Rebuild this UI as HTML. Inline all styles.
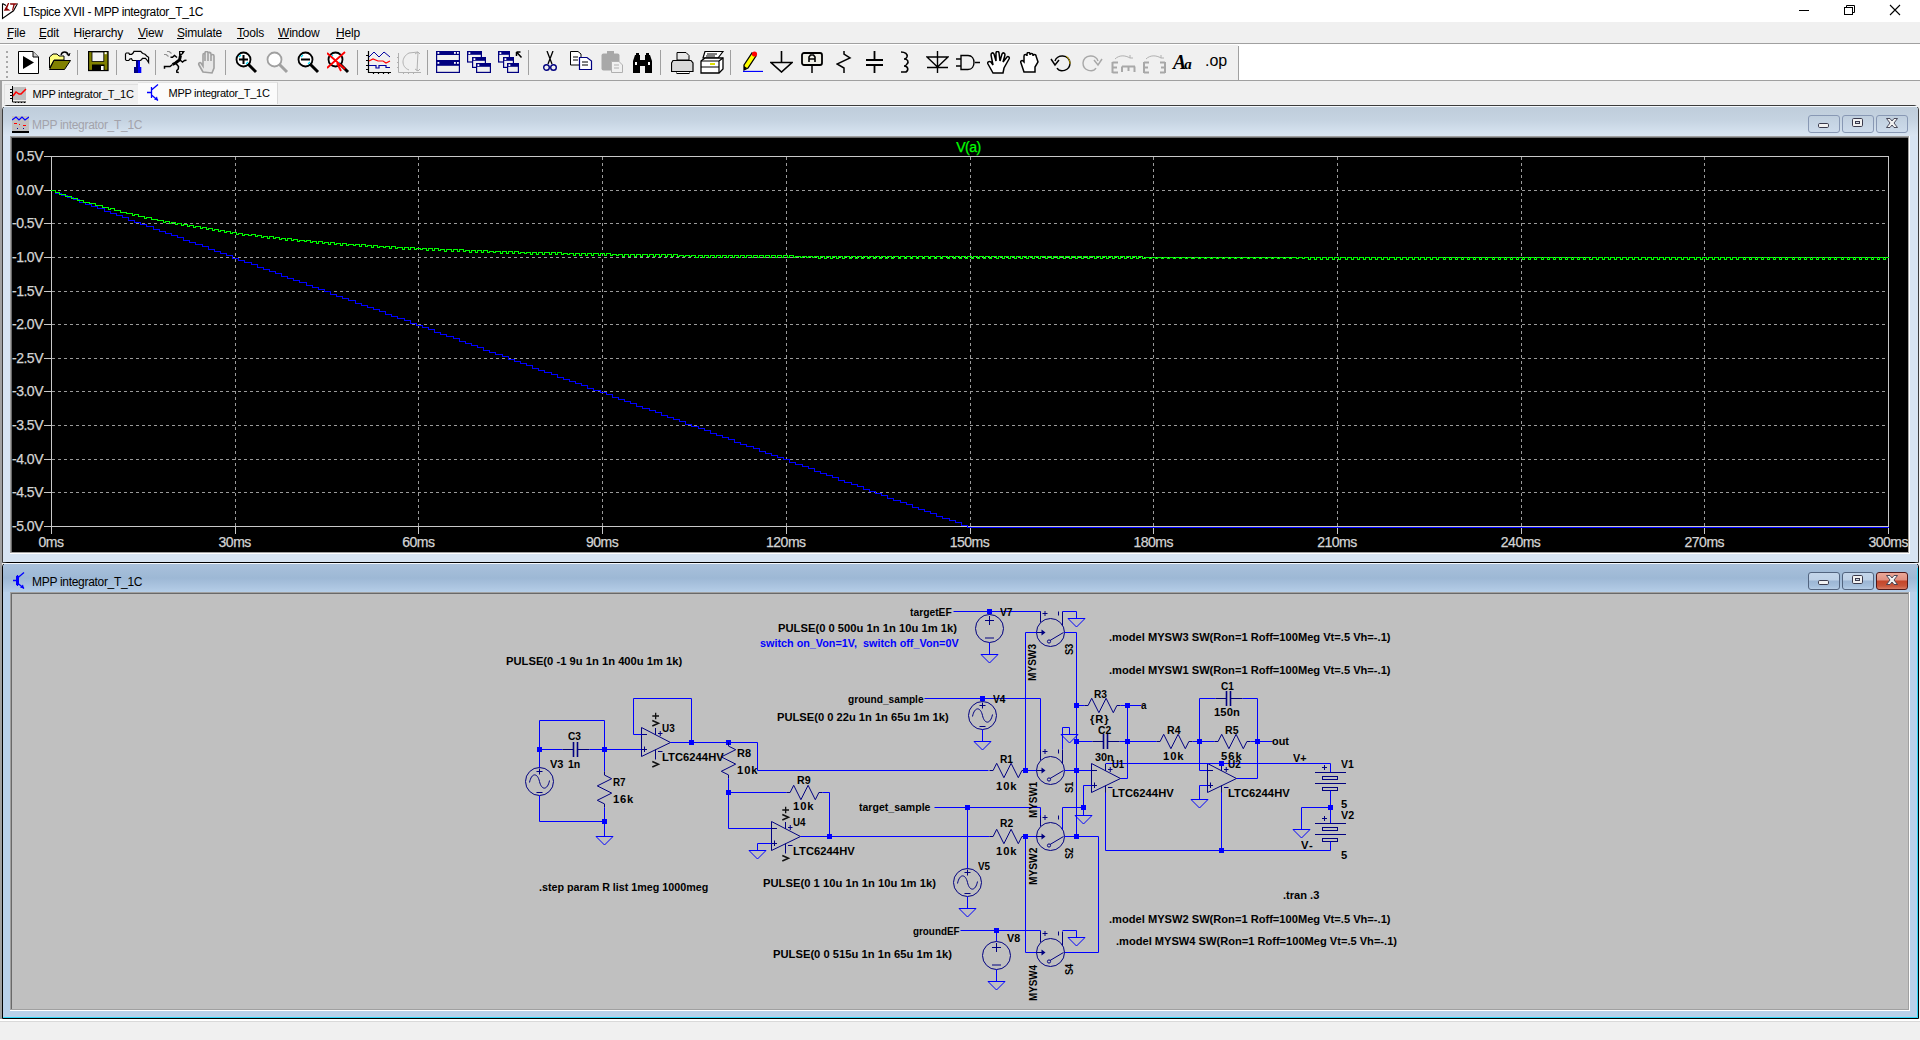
<!DOCTYPE html>
<html><head><meta charset="utf-8"><title>LTspice</title>
<style>
html,body{margin:0;padding:0;width:1920px;height:1040px;overflow:hidden;background:#f0f0f0;font-family:"Liberation Sans",sans-serif}
div{box-sizing:content-box}
</style></head><body>
<div style="position:absolute;left:0;top:0;width:1920px;height:22px;background:#fff"></div>
<svg style="position:absolute;left:0px;top:0px" width="22" height="22" viewBox="0 0 22 22">
<path d="M2.5 3.5 V18.5 L13.5 10.8 L17.5 3.5 M2.5 3.5 L6 5.5" fill="none" stroke="#000" stroke-width="1.1"/>
<path d="M8 3 L9.2 3 L7.2 8.2 L10.5 10.6 L3.8 10.8 Z" fill="#8b0000"/>
<path d="M10 3.3 L17.2 3.3 L15.8 4.8 L14.8 4.8 L13 10.5 L12 10.3 L13.3 4.8 L10.3 4.8 Z" fill="#8b0000"/>
</svg>
<div style="position:absolute;left:23px;top:5px;font:12px 'Liberation Sans', sans-serif;color:#000;white-space:nowrap;letter-spacing:-0.36px">LTspice XVII - MPP integrator_T_1C</div>
<svg style="position:absolute;left:1780px;top:0" width="140" height="22" viewBox="0 0 140 22">
<line x1="19" y1="10.5" x2="29" y2="10.5" stroke="#000" stroke-width="1"/>
<rect x="64.5" y="7.5" width="8" height="7" fill="none" stroke="#000"/>
<path d="M66.5 7.5 V5.5 H74.5 V12.5 H72.5" fill="none" stroke="#000"/>
<path d="M110 5 L120 15 M120 5 L110 15" stroke="#000" stroke-width="1.1"/>
</svg>
<div style="position:absolute;left:0;top:22px;width:1920px;height:21px;background:#f0f0f0"></div>
<div style="position:absolute;left:0;top:43px;width:1920px;height:1px;background:#a0a0a0"></div>
<div style="position:absolute;left:0;top:44px;width:1920px;height:1px;background:#ffffff"></div>
<div style="position:absolute;left:7px;top:26px;font:12px 'Liberation Sans', sans-serif;color:#000;white-space:nowrap;letter-spacing:-0.2px">File</div>
<div style="position:absolute;left:39px;top:26px;font:12px 'Liberation Sans', sans-serif;color:#000;white-space:nowrap;letter-spacing:-0.2px">Edit</div>
<div style="position:absolute;left:73.5px;top:26px;font:12px 'Liberation Sans', sans-serif;color:#000;white-space:nowrap;letter-spacing:-0.2px">Hierarchy</div>
<div style="position:absolute;left:138px;top:26px;font:12px 'Liberation Sans', sans-serif;color:#000;white-space:nowrap;letter-spacing:-0.2px">View</div>
<div style="position:absolute;left:177px;top:26px;font:12px 'Liberation Sans', sans-serif;color:#000;white-space:nowrap;letter-spacing:-0.2px">Simulate</div>
<div style="position:absolute;left:237px;top:26px;font:12px 'Liberation Sans', sans-serif;color:#000;white-space:nowrap;letter-spacing:-0.2px">Tools</div>
<div style="position:absolute;left:278px;top:26px;font:12px 'Liberation Sans', sans-serif;color:#000;white-space:nowrap;letter-spacing:-0.2px">Window</div>
<div style="position:absolute;left:336px;top:26px;font:12px 'Liberation Sans', sans-serif;color:#000;white-space:nowrap;letter-spacing:-0.2px">Help</div>
<div style="position:absolute;left:7px;top:38px;width:6px;height:1px;background:#000"></div>
<div style="position:absolute;left:39px;top:38px;width:7px;height:1px;background:#000"></div>
<div style="position:absolute;left:84px;top:38px;width:3px;height:1px;background:#000"></div>
<div style="position:absolute;left:138px;top:38px;width:8px;height:1px;background:#000"></div>
<div style="position:absolute;left:177px;top:38px;width:7px;height:1px;background:#000"></div>
<div style="position:absolute;left:237px;top:38px;width:7px;height:1px;background:#000"></div>
<div style="position:absolute;left:278px;top:38px;width:11px;height:1px;background:#000"></div>
<div style="position:absolute;left:336px;top:38px;width:8px;height:1px;background:#000"></div>
<div style="position:absolute;left:0;top:45px;width:1920px;height:35px;background:#ffffff"></div>
<div style="position:absolute;left:0;top:45px;width:1238px;height:35px;background:#f0f0f0"></div>
<div style="position:absolute;left:1238px;top:46px;width:1px;height:34px;background:#a0a0a0"></div>
<div style="position:absolute;left:0;top:80px;width:1920px;height:1px;background:#a0a0a0"></div>
<div style="position:absolute;left:0;top:81px;width:1920px;height:24px;background:#f0f0f0"></div>
<div style="position:absolute;left:0;top:81px;width:2px;height:959px;background:#a0a0a0"></div>
<div style="position:absolute;left:4px;top:84px;width:133px;height:19px;background:#f0f0f0;border:1px solid #e0e0e0;border-bottom:none"></div>
<div style="position:absolute;left:138px;top:82px;width:139px;height:21px;background:#fbfbfb;border-top:1px solid #e4e4e4;border-right:1px solid #d8d8d8"></div>
<div style="position:absolute;left:32.5px;top:88px;font:11px 'Liberation Sans', sans-serif;color:#000;white-space:nowrap;letter-spacing:-0.27px">MPP integrator_T_1C</div>
<div style="position:absolute;left:168.5px;top:87px;font:11px 'Liberation Sans', sans-serif;color:#000;white-space:nowrap;letter-spacing:-0.27px">MPP integrator_T_1C</div>
<svg style="position:absolute;left:10px;top:86px" width="17" height="17" viewBox="0 0 17 17">
<rect x="3" y="1" width="13" height="13" fill="#c0c0c0"/>
<path d="M2.5 0 V16 H16" fill="none" stroke="#000" stroke-width="1"/>
<path d="M0 3.5H2.5 M0 6.5H2.5 M0 9.5H2.5 M0 12.5H2.5 M5.5 16V17 M8.5 16V17 M11.5 16V17 M14.5 16V17" stroke="#000"/>
<path d="M3 10 L6 6 L9 8 L11 8 L16 3" fill="none" stroke="#ff0000" stroke-width="1.5"/>
</svg>
<svg style="position:absolute;left:147px;top:84px" width="14" height="17" viewBox="0 0 14 17">
<path d="M0 8.5H4 M4.5 3V14 M4.5 6 L11 0.5 M4.5 11 L11 16.5" fill="none" stroke="#0000ff" stroke-width="1.3"/>
<path d="M11 16.5 L7 15.5 L10 12.5Z" fill="#0000ff"/>
</svg>
<div style="position:absolute;left:0;top:1019px;width:1920px;height:2px;background:#ffffff"></div>
<div style="position:absolute;left:0;top:1021px;width:1920px;height:1px;background:#d9d9d9"></div>
<div style="position:absolute;left:0;top:1022px;width:1920px;height:18px;background:#f0f0f0"></div>
<svg style="position:absolute;left:5px;top:51px" width="4" height="30" viewBox="0 0 4 30"><rect x="1" y="0" width="2" height="2" fill="#a8a8a8"/><rect x="1" y="5" width="2" height="2" fill="#a8a8a8"/><rect x="1" y="10" width="2" height="2" fill="#a8a8a8"/><rect x="1" y="15" width="2" height="2" fill="#a8a8a8"/><rect x="1" y="20" width="2" height="2" fill="#a8a8a8"/><rect x="1" y="25" width="2" height="2" fill="#a8a8a8"/></svg>
<div style="position:absolute;left:77px;top:50px;width:1px;height:25px;background:#a0a0a0"></div>
<div style="position:absolute;left:116px;top:50px;width:1px;height:25px;background:#a0a0a0"></div>
<div style="position:absolute;left:155px;top:50px;width:1px;height:25px;background:#a0a0a0"></div>
<div style="position:absolute;left:225px;top:50px;width:1px;height:25px;background:#a0a0a0"></div>
<div style="position:absolute;left:357px;top:50px;width:1px;height:25px;background:#a0a0a0"></div>
<div style="position:absolute;left:427px;top:50px;width:1px;height:25px;background:#a0a0a0"></div>
<div style="position:absolute;left:528px;top:50px;width:1px;height:25px;background:#a0a0a0"></div>
<div style="position:absolute;left:660px;top:50px;width:1px;height:25px;background:#a0a0a0"></div>
<div style="position:absolute;left:730px;top:50px;width:1px;height:25px;background:#a0a0a0"></div>
<svg style="position:absolute;left:18px;top:51px" width="22" height="24" viewBox="0 0 22 24"><path d="M0.5 0.5 H15 L20.5 6 V22.5 H0.5 Z" fill="#fff" stroke="#000"/><path d="M15 0.5 V6 H20.5" fill="#d0d0d0" stroke="#000"/><path d="M5 5 L16 11.5 L5 18 Z" fill="#000"/></svg>
<svg style="position:absolute;left:49px;top:51px" width="23" height="20" viewBox="0 0 23 20"><path d="M0.5 6 L4 3 L8 3 L10 5 L15 5 L15 9 L5 9 L0.5 17 Z" fill="#ffff80" stroke="#000"/><path d="M0.5 18.5 L5 9.5 L21.5 9.5 L15.5 18.5 Z" fill="#808000" stroke="#000"/><path d="M12 4 C13 0 18 0 19.5 4" fill="none" stroke="#000" stroke-width="1.3"/><path d="M17.5 3 L20 5 L21 2" fill="none" stroke="#000"/></svg>
<svg style="position:absolute;left:88px;top:51px" width="21" height="21" viewBox="0 0 21 21"><rect x="0.5" y="0.5" width="19.5" height="19" fill="#808000" stroke="#000" stroke-width="1.3"/><rect x="4" y="1" width="11.8" height="9.5" fill="#f4f4f4" stroke="#000" stroke-width="0.8"/><rect x="16.7" y="1.2" width="2" height="2" fill="#fff"/><rect x="4" y="13.5" width="12.5" height="6" fill="#000"/><rect x="13" y="15" width="2.6" height="4" fill="#fff"/></svg>
<svg style="position:absolute;left:122px;top:48px" width="30" height="28" viewBox="0 0 30 28"><path d="M3.5 6 L4.3 5 H6.8 L7.5 6.3 H9.7 L11.3 4.8 L12 3.3 H18.8 L20 4.8 L21 5.5 L23 6.3 L25 8.2 L26.6 9.3 V14.5 L25 12 L23.5 10.4 H20.5 L19.6 11.5 L18.5 12.5 H10.5 L9.5 10.6 L7.8 11 L6.8 12.5 H4.3 L3.5 11.5 Z" fill="#f4f4f4" stroke="#000" stroke-width="1.2"/><rect x="14" y="12.5" width="4" height="7" fill="#0000ff"/><rect x="14" y="12.5" width="2" height="7" fill="#000080"/><rect x="12" y="19" width="7.3" height="6" fill="#0000ff"/><rect x="12" y="19" width="4" height="6" fill="#000080"/></svg>
<svg style="position:absolute;left:160px;top:48px" width="30" height="28" viewBox="0 0 30 28"><path d="M19 3 H25 L23 6 L21.5 7.2 L20 8.2 L19 7.5 Z" fill="#000"/><rect x="20.3" y="4" width="1.6" height="1.6" fill="#fff"/><path d="M20.5 7.5 L19.5 12 L15.5 15 L12.5 16.5" fill="none" stroke="#000" stroke-width="3"/><path d="M12.5 16.5 L10 18.5 H4.5 V20.8 M16 15.5 L18.5 18.5 L18.3 21 L16.8 22.5 V24.2 L18.8 24.5 M17 9.5 L14.5 7.5 L12.5 9.2 L10.5 9.3 M20 12 L22.5 14 L24.5 12.5 L26.5 12.3" fill="none" stroke="#000" stroke-width="1.5"/><path d="M7 3.5 H9.2 L11.5 5.5 M4 6.5 H6.2 L8.5 8.5" fill="none" stroke="#909090" stroke-width="1.1"/></svg>
<svg style="position:absolute;left:197px;top:51px" width="20" height="23" viewBox="0 0 20 23"><path d="M6 21 L2 14 C1 12 3 11 4 12 L6 15 V4 C6 2 8 2 8 4 V10 V2 C8 0 11 0 11 2 V10 V2 C11 1 14 1 14 3 V10 V5 C14 3 17 3 17 5 V17 L15 22 Z" fill="#e8e8e8" stroke="#a0a0a0" stroke-width="1.6"/></svg>
<svg style="position:absolute;left:235px;top:51px" width="23" height="23" viewBox="0 0 23 23"><circle cx="8.5" cy="8.5" r="7" fill="#fff" stroke="#000" stroke-width="1.8"/><path d="M13 13 L21 21" stroke="#000" stroke-width="3"/><path d="M4 6 L6 4 M11 13 L13 11" stroke="#00e0ff" stroke-width="1.2"/><path d="M4 8.5 H13 M8.5 4 V13" stroke="#000" stroke-width="2"/></svg>
<svg style="position:absolute;left:266px;top:51px" width="23" height="23" viewBox="0 0 23 23"><circle cx="8.5" cy="8.5" r="7" fill="#fff" stroke="#a0a0a0" stroke-width="1.8"/><path d="M13 13 L21 21" stroke="#a0a0a0" stroke-width="3"/></svg>
<svg style="position:absolute;left:297px;top:51px" width="23" height="23" viewBox="0 0 23 23"><circle cx="8.5" cy="8.5" r="7" fill="#fff" stroke="#000" stroke-width="1.8"/><path d="M13 13 L21 21" stroke="#000" stroke-width="3"/><path d="M4 6 L6 4 M11 13 L13 11" stroke="#00e0ff" stroke-width="1.2"/><path d="M4 8.5 H13" stroke="#000" stroke-width="2"/></svg>
<svg style="position:absolute;left:327px;top:51px" width="25" height="23" viewBox="0 0 25 23"><circle cx="8.5" cy="8.5" r="7" fill="#fff" stroke="#000" stroke-width="1.8"/><path d="M13 13 L21 21" stroke="#000" stroke-width="3"/><path d="M4 6 L6 4 M11 13 L13 11" stroke="#00e0ff" stroke-width="1.2"/><path d="M0 2 L18 18 M18 1 L0 17 M10 12 L14 20" stroke="#ff0000" stroke-width="1.8"/></svg>
<svg style="position:absolute;left:366px;top:51px" width="25" height="23" viewBox="0 0 25 23"><path d="M2.5 0 V21.5 H25 M0 4.5H2.5 M0 9.5H2.5 M0 14.5H2.5 M0 18.5H2.5 M7.5 21.5V23 M12.5 21.5V23 M17.5 21.5V23 M22.5 21.5V23" fill="none" stroke="#000" stroke-width="1.2"/><path d="M3 6 L8 1 L13 6 L18 1 L24 6" fill="none" stroke="#0000a0"/><path d="M3 10 L7 8 L12 10 L17 10 L20 12 L24 10" fill="none" stroke="#ff0000" stroke-width="1.2"/><path d="M3 14.5 H10 V17 H13 V14.5 H20 V16.5 H24" fill="none" stroke="#0000a0" stroke-width="1.2"/></svg>
<svg style="position:absolute;left:397px;top:51px" width="25" height="23" viewBox="0 0 25 23"><path d="M1.5 2 V21.5 H24 M0 6.5H1.5 M0 11.5H1.5 M0 16.5H1.5 M6.5 21.5V23 M11.5 21.5V23 M16.5 21.5V23" fill="none" stroke="#b0b0b0"/><path d="M21 1 L20 20 M12 2 C4 6 4 16 12 19 M18 3 L21 1 L23 3 M18 18 L21 20 L23 18 M12 2 L21 1" fill="none" stroke="#b0b0b0"/></svg>
<svg style="position:absolute;left:432px;top:48px" width="94" height="28" viewBox="0 0 94 28"><rect x="4" y="3" width="24" height="22" fill="#000080"/><rect x="5.2" y="7" width="21.6" height="5" fill="#f0f0f0"/><rect x="5.2" y="17.8" width="21.6" height="6" fill="#f0f0f0"/><rect x="5.5" y="4" width="1.8" height="1.8" fill="#fff"/><rect x="22" y="4" width="1.8" height="1.8" fill="#fff"/><rect x="25" y="4" width="1.8" height="1.8" fill="#fff"/><rect x="5.5" y="14" width="1.8" height="1.8" fill="#fff"/><rect x="22" y="14" width="1.8" height="1.8" fill="#fff"/><rect x="25" y="14" width="1.8" height="1.8" fill="#fff"/><rect x="35" y="3" width="15" height="11.6" fill="#000080"/><rect x="36.2" y="6.8" width="12.6" height="6.6" fill="#f0f0f0"/><rect x="36.5" y="4.2" width="1.8" height="1.8" fill="#fff"/><rect x="40" y="9" width="14" height="11" fill="#000080"/><rect x="41.2" y="12.8" width="11.6" height="6.0" fill="#f0f0f0"/><rect x="41.5" y="10.2" width="1.8" height="1.8" fill="#fff"/><rect x="44" y="15" width="15" height="10" fill="#000080"/><rect x="45.2" y="18.8" width="12.6" height="5.0" fill="#f0f0f0"/><rect x="45.5" y="16.2" width="1.8" height="1.8" fill="#fff"/><rect x="66" y="3" width="12" height="11.6" fill="#000080"/><rect x="67.2" y="6.8" width="9.6" height="6.6" fill="#f0f0f0"/><rect x="67.5" y="4.2" width="1.8" height="1.8" fill="#fff"/><rect x="71" y="9" width="11" height="11" fill="#000080"/><rect x="72.2" y="12.8" width="8.6" height="6.0" fill="#f0f0f0"/><rect x="72.5" y="10.2" width="1.8" height="1.8" fill="#fff"/><rect x="75" y="15" width="12" height="10" fill="#000080"/><rect x="76.2" y="18.8" width="9.6" height="5.0" fill="#f0f0f0"/><rect x="76.5" y="16.2" width="1.8" height="1.8" fill="#fff"/><path d="M84.5 4 L89.5 9.5 M84.5 4 V8 M84.5 4 H88.5" fill="none" stroke="#000" stroke-width="1.5"/></svg>
<svg style="position:absolute;left:543px;top:51px" width="14" height="21" viewBox="0 0 14 21"><path d="M4 0 L9 13 M10 0 L5 13" stroke="#000" stroke-width="1.3"/><circle cx="3.5" cy="16.5" r="2.8" fill="none" stroke="#000080" stroke-width="1.4"/><circle cx="10.5" cy="16.5" r="2.8" fill="none" stroke="#000080" stroke-width="1.4"/></svg>
<svg style="position:absolute;left:570px;top:51px" width="23" height="20" viewBox="0 0 23 20"><path d="M0.5 0.5 H8 L11 3 V14 H0.5 Z" fill="#fff" stroke="#000"/><path d="M3 6H8 M3 9H8" stroke="#000"/><path d="M9.5 6.5 H17 L21.5 10 V18.5 H9.5 Z" fill="#fff" stroke="#000080" stroke-width="1.2"/><path d="M12 11H18 M12 14H18" stroke="#000"/></svg>
<svg style="position:absolute;left:601px;top:51px" width="22" height="22" viewBox="0 0 22 22"><rect x="0.5" y="2.5" width="18" height="17" rx="2" fill="#a8a8a8"/><rect x="6" y="0" width="7" height="4" fill="#a8a8a8"/><path d="M10.5 10.5 H18 L21.5 14 V21.5 H10.5 Z" fill="#f0f0f0" stroke="#b0b0b0"/><path d="M13 14H18 M13 17H18" stroke="#b0b0b0"/></svg>
<svg style="position:absolute;left:631px;top:52px" width="23" height="21" viewBox="0 0 23 21"><path d="M2 21 V9 L4 3 H9 V21 Z M14 21 V3 H19 L21 9 V21 Z M9 8 H14 V14 H9 Z" fill="#000"/><rect x="4" y="10" width="2" height="3" fill="#fff"/><rect x="17" y="10" width="2" height="3" fill="#fff"/><rect x="5" y="1" width="3" height="3" fill="#000"/><rect x="15" y="1" width="3" height="3" fill="#000"/></svg>
<svg style="position:absolute;left:671px;top:52px" width="23" height="22" viewBox="0 0 23 22"><path d="M6 0.5 H15 L18 3.5 V8 H6 Z" fill="#e8e8e8" stroke="#000"/><path d="M2 8.5 H20 L22 11 V19.5 H0.5 V11 Z" fill="#d8d8d8" stroke="#000" stroke-width="1.2"/><rect x="6" y="19.5" width="12" height="2" fill="#fff" stroke="#000"/></svg>
<svg style="position:absolute;left:700px;top:51px" width="25" height="23" viewBox="0 0 25 23"><path d="M5 0.5 H23 L18 7 H3 Z" fill="#fff" stroke="#000" stroke-width="1.2"/><path d="M7 3H17 M6 5H15" stroke="#000"/><path d="M1 10 L5 7 H23 V18 L19 22 H1 Z" fill="#fff" stroke="#000" stroke-width="1.3"/><path d="M1 10 H19 V22 M19 10 L23 7 M1 16 H19" fill="none" stroke="#000" stroke-width="1.2"/><rect x="10" y="12" width="5" height="2" fill="#e0e000"/></svg>
<svg style="position:absolute;left:742px;top:51px" width="22" height="21" viewBox="0 0 22 21"><path d="M2 14 L10 2 L14 5 L6 17 L2 19 Z" fill="#ffff00" stroke="#000" stroke-width="1.3"/><circle cx="12.5" cy="3" r="2.6" fill="#ff0000"/><path d="M2 15 L2 19 L5 17" fill="#000"/><path d="M1 20.5 H21" stroke="#0000ff" stroke-width="1.3"/></svg>
<svg style="position:absolute;left:770px;top:51px" width="23" height="22" viewBox="0 0 23 22"><path d="M11.5 0 V11 M1 11.5 H22 L11.5 21 Z" fill="none" stroke="#000" stroke-width="1.6"/></svg>
<svg style="position:absolute;left:801px;top:51px" width="22" height="23" viewBox="0 0 22 23"><rect x="1" y="2" width="20" height="12" rx="2" fill="#f0f0e8" stroke="#000" stroke-width="1.8"/><path d="M11 14 V22" stroke="#000" stroke-width="1.5"/><path d="M8 11 V6 L9.5 4 H12.5 L14 6 V11 M8 8 H14" fill="none" stroke="#000" stroke-width="1.6"/></svg>
<svg style="position:absolute;left:836px;top:51px" width="17" height="22" viewBox="0 0 17 22"><path d="M8 0 V3 L14 7 L1 13 L8 17 V22" fill="none" stroke="#000" stroke-width="1.5"/></svg>
<svg style="position:absolute;left:866px;top:51px" width="17" height="22" viewBox="0 0 17 22"><path d="M8.5 0 V8 M8.5 15 V22 M0 9 H17 M0 14 H17" fill="none" stroke="#000" stroke-width="1.8"/></svg>
<svg style="position:absolute;left:900px;top:51px" width="11" height="22" viewBox="0 0 11 22"><path d="M1 1 C5 1 8 3 7 6 C6 8 4 8 4 8 C8 8 9 11 7 13 C6 15 4 15 4 15 C8 15 9 19 6 21 L1 21" fill="none" stroke="#000" stroke-width="1.6"/></svg>
<svg style="position:absolute;left:926px;top:51px" width="23" height="22" viewBox="0 0 23 22"><path d="M11.5 0 V22 M1 6 H22 L11.5 16 Z M1 16.5 H22" fill="none" stroke="#000" stroke-width="1.4"/></svg>
<svg style="position:absolute;left:956px;top:54px" width="24" height="17" viewBox="0 0 24 17"><path d="M5 1.5 H12 C20 1.5 20 15.5 12 15.5 H5 Z M0 5 H5 M0 12 H5 M19 8.5 H24" fill="none" stroke="#000" stroke-width="1.4"/></svg>
<svg style="position:absolute;left:987px;top:51px" width="24" height="23" viewBox="0 0 24 23"><path d="M6 22 L1 13 C0 11 2 10 4 11 L6 14 L4 4 C4 2 6 1 7 3 L9 10 L9 2 C9 0 12 0 12 2 L13 10 L15 3 C16 1 18 2 18 4 L16 11 L20 6 C21 5 23 6 22 8 L17 17 L16 22 Z" fill="#fff" stroke="#000" stroke-width="1.5"/></svg>
<svg style="position:absolute;left:1020px;top:52px" width="20" height="21" viewBox="0 0 20 21"><path d="M4 20 L1 11 C0 9 2 8 3 9 L4 10 L4 4 C4 2 7 2 7 4 V2 C7 0 10 0 10 2 V3 C10 1 13 1 13 3 V4 C13 2 16 2 16 4 L18 10 L15 15 V20 Z" fill="#fff" stroke="#000" stroke-width="1.5"/></svg>
<svg style="position:absolute;left:1050px;top:53px" width="22" height="20" viewBox="0 0 22 20"><path d="M5 8 C7 1 19 1 20 10 C20 18 10 20 7 15" fill="none" stroke="#000" stroke-width="1.4"/><path d="M1 6 L5 12 L9 7" fill="none" stroke="#000" stroke-width="1.5"/><path d="M16 3 C19 5 20 8 20 11" fill="none" stroke="#c0a000" stroke-width="1"/></svg>
<svg style="position:absolute;left:1082px;top:53px" width="22" height="20" viewBox="0 0 22 20"><path d="M16 8 C14 1 2 1 1 10 C1 18 11 20 14 15" fill="none" stroke="#a8a8a8" stroke-width="1.4"/><path d="M20 6 L16 12 L12 7" fill="none" stroke="#a8a8a8" stroke-width="1.5"/></svg>
<svg style="position:absolute;left:1111px;top:51px" width="25" height="23" viewBox="0 0 25 23"><path d="M4 8 C8 4 14 4 19 7 M19 7 V4 M19 7 L22 7" fill="none" stroke="#b0b0b0"/><path d="M1.5 11 V22 M1.5 11.5 H7 M1.5 16.5 H6 M1.5 21.5 H7" fill="none" stroke="#a8a8a8" stroke-width="2"/><path d="M11 15.5 V21 M11 15.5 H24 M17.5 15.5 V20 M23.5 15.5 V21" fill="none" stroke="#a8a8a8" stroke-width="2"/></svg>
<svg style="position:absolute;left:1142px;top:51px" width="25" height="23" viewBox="0 0 25 23"><path d="M4 8 C8 4 14 4 19 7 M19 7 V4 M19 7 L22 7" fill="none" stroke="#b0b0b0"/><path d="M2 11 V22 M2 11.5 H7 M2 16.5 H6 M2 21.5 H7 M23 11 V22 M23 11.5 H18 M23 16.5 H19 M23 21.5 H18" fill="none" stroke="#a8a8a8" stroke-width="2"/></svg>
<div style="position:absolute;left:1173px;top:51px;font:italic bold 20px 'Liberation Serif',serif;color:#000;letter-spacing:-2px">A<span style="font-size:15px">a</span></div>
<div style="position:absolute;left:1205px;top:52px;font:16px 'Liberation Sans',sans-serif;color:#000;letter-spacing:0px">.op</div>
<div style="position:absolute;left:2px;top:105px;width:1917px;height:458px;box-sizing:border-box;border:1px solid #3c3c3c;border-radius:5px 5px 0 0;background:#d7e4f2"></div>
<div style="position:absolute;left:3px;top:106px;width:1915px;height:1px;background:#f4f8fc;border-radius:4px 4px 0 0"></div>
<div style="position:absolute;left:3px;top:107px;width:1915px;height:29px;border-radius:3px 3px 0 0;background:linear-gradient(#bfcddb 0px,#c6d4e2 14px,#d3e0ed 24px,#dbe6f2 30px)"></div>
<div style="position:absolute;left:32px;top:118px;font:12px 'Liberation Sans',sans-serif;color:#a3a3ab;white-space:nowrap;letter-spacing:-0.3px">MPP integrator_T_1C</div>
<div style="position:absolute;left:12px;top:116px;width:17px;height:17px"><svg width="17" height="17" viewBox="0 0 17 17"><rect x="0" y="0" width="17" height="16" fill="#c0c0c0"/>
<path d="M0 4 L4 1 L7 4 L10 1 L13 4 L17 1" fill="none" stroke="#0000ff" stroke-width="1.2"/>
<rect x="2" y="7" width="3" height="1" fill="#ff0000"/><rect x="7" y="8" width="1" height="1" fill="#ff0000"/><rect x="11" y="9" width="3" height="1" fill="#ff0000"/>
<rect x="5" y="12" width="1" height="1" fill="#0000a0"/><rect x="11" y="12" width="1" height="1" fill="#0000a0"/>
<rect x="0" y="15" width="17" height="2" fill="#000"/></svg></div>
<div style="position:absolute;left:1808px;top:115px;width:32px;height:18px;box-sizing:border-box;border:1px solid #8898b4;border-radius:3px;background:linear-gradient(#c0cfde,#cddbeb)"></div>
<div style="position:absolute;left:1842px;top:115px;width:32px;height:18px;box-sizing:border-box;border:1px solid #8898b4;border-radius:3px;background:linear-gradient(#c0cfde,#cddbeb)"></div>
<div style="position:absolute;left:1876px;top:115px;width:32px;height:18px;box-sizing:border-box;border:1px solid #8898b4;border-radius:3px;background:linear-gradient(#c0cfde,#cddbeb)"></div>
<svg style="position:absolute;left:1808px;top:115px" width="100" height="18" viewBox="0 0 100 18">
<rect x="10.5" y="8.5" width="10" height="4" rx="1.2" fill="#f2f2f2" stroke="#3a3a4c" stroke-width="1"/>
<rect x="44.5" y="3.5" width="10" height="8" rx="1.2" fill="#f2f2f2" stroke="#3a3a4c" stroke-width="1"/>
<rect x="47.5" y="6.5" width="4" height="2" fill="#cfd8e4" stroke="#3a3a4c" stroke-width="1"/>
<path d="M78.5 3.5 L82 3.5 L84 6 L86 3.5 L89.5 3.5 L86 8 L89.5 12.5 L86 12.5 L84 10 L82 12.5 L78.5 12.5 L82 8 Z" fill="#f2f2f2" stroke="#3a3a4c" stroke-width="0.9"/>
</svg>
<div style="position:absolute;left:10px;top:136px;width:1900px;height:418px;background:#ffffff"></div>
<div style="position:absolute;left:10px;top:136px;width:1899px;height:417px;background:#a0a0a0"></div>
<div style="position:absolute;left:11px;top:137px;width:1897px;height:415px;background:#696969"></div>
<div style="position:absolute;left:12px;top:138px;width:1896px;height:414px;overflow:hidden"><div style="position:relative;width:1896px;height:414px"><svg width="1896" height="414" viewBox="12 138 1896 414" style="display:block;background:#000"><line x1="52" y1="190.5" x2="1888" y2="190.5" stroke="#9a9a9a" stroke-width="1" stroke-dasharray="3 3"/><line x1="52" y1="223.5" x2="1888" y2="223.5" stroke="#9a9a9a" stroke-width="1" stroke-dasharray="3 3"/><line x1="52" y1="257.5" x2="1888" y2="257.5" stroke="#9a9a9a" stroke-width="1" stroke-dasharray="3 3"/><line x1="52" y1="291.5" x2="1888" y2="291.5" stroke="#9a9a9a" stroke-width="1" stroke-dasharray="3 3"/><line x1="52" y1="324.5" x2="1888" y2="324.5" stroke="#9a9a9a" stroke-width="1" stroke-dasharray="3 3"/><line x1="52" y1="358.5" x2="1888" y2="358.5" stroke="#9a9a9a" stroke-width="1" stroke-dasharray="3 3"/><line x1="52" y1="391.5" x2="1888" y2="391.5" stroke="#9a9a9a" stroke-width="1" stroke-dasharray="3 3"/><line x1="52" y1="425.5" x2="1888" y2="425.5" stroke="#9a9a9a" stroke-width="1" stroke-dasharray="3 3"/><line x1="52" y1="459.5" x2="1888" y2="459.5" stroke="#9a9a9a" stroke-width="1" stroke-dasharray="3 3"/><line x1="52" y1="492.5" x2="1888" y2="492.5" stroke="#9a9a9a" stroke-width="1" stroke-dasharray="3 3"/><line x1="235.5" y1="157" x2="235.5" y2="526" stroke="#9a9a9a" stroke-width="1" stroke-dasharray="3 3"/><line x1="418.5" y1="157" x2="418.5" y2="526" stroke="#9a9a9a" stroke-width="1" stroke-dasharray="3 3"/><line x1="602.5" y1="157" x2="602.5" y2="526" stroke="#9a9a9a" stroke-width="1" stroke-dasharray="3 3"/><line x1="786.5" y1="157" x2="786.5" y2="526" stroke="#9a9a9a" stroke-width="1" stroke-dasharray="3 3"/><line x1="970.5" y1="157" x2="970.5" y2="526" stroke="#9a9a9a" stroke-width="1" stroke-dasharray="3 3"/><line x1="1153.5" y1="157" x2="1153.5" y2="526" stroke="#9a9a9a" stroke-width="1" stroke-dasharray="3 3"/><line x1="1337.5" y1="157" x2="1337.5" y2="526" stroke="#9a9a9a" stroke-width="1" stroke-dasharray="3 3"/><line x1="1521.5" y1="157" x2="1521.5" y2="526" stroke="#9a9a9a" stroke-width="1" stroke-dasharray="3 3"/><line x1="1704.5" y1="157" x2="1704.5" y2="526" stroke="#9a9a9a" stroke-width="1" stroke-dasharray="3 3"/><rect x="51.5" y="156.5" width="1837" height="370" fill="none" stroke="#c8c8c8" stroke-width="1"/><line x1="44" y1="156.5" x2="51" y2="156.5" stroke="#c8c8c8" stroke-width="1"/><line x1="44" y1="190.5" x2="51" y2="190.5" stroke="#c8c8c8" stroke-width="1"/><line x1="44" y1="223.5" x2="51" y2="223.5" stroke="#c8c8c8" stroke-width="1"/><line x1="44" y1="257.5" x2="51" y2="257.5" stroke="#c8c8c8" stroke-width="1"/><line x1="44" y1="291.5" x2="51" y2="291.5" stroke="#c8c8c8" stroke-width="1"/><line x1="44" y1="324.5" x2="51" y2="324.5" stroke="#c8c8c8" stroke-width="1"/><line x1="44" y1="358.5" x2="51" y2="358.5" stroke="#c8c8c8" stroke-width="1"/><line x1="44" y1="391.5" x2="51" y2="391.5" stroke="#c8c8c8" stroke-width="1"/><line x1="44" y1="425.5" x2="51" y2="425.5" stroke="#c8c8c8" stroke-width="1"/><line x1="44" y1="459.5" x2="51" y2="459.5" stroke="#c8c8c8" stroke-width="1"/><line x1="44" y1="492.5" x2="51" y2="492.5" stroke="#c8c8c8" stroke-width="1"/><line x1="44" y1="526.5" x2="51" y2="526.5" stroke="#c8c8c8" stroke-width="1"/><line x1="51.5" y1="527" x2="51.5" y2="534" stroke="#c8c8c8" stroke-width="1"/><line x1="235.5" y1="527" x2="235.5" y2="534" stroke="#c8c8c8" stroke-width="1"/><line x1="418.5" y1="527" x2="418.5" y2="534" stroke="#c8c8c8" stroke-width="1"/><line x1="602.5" y1="527" x2="602.5" y2="534" stroke="#c8c8c8" stroke-width="1"/><line x1="786.5" y1="527" x2="786.5" y2="534" stroke="#c8c8c8" stroke-width="1"/><line x1="970.5" y1="527" x2="970.5" y2="534" stroke="#c8c8c8" stroke-width="1"/><line x1="1153.5" y1="527" x2="1153.5" y2="534" stroke="#c8c8c8" stroke-width="1"/><line x1="1337.5" y1="527" x2="1337.5" y2="534" stroke="#c8c8c8" stroke-width="1"/><line x1="1521.5" y1="527" x2="1521.5" y2="534" stroke="#c8c8c8" stroke-width="1"/><line x1="1704.5" y1="527" x2="1704.5" y2="534" stroke="#c8c8c8" stroke-width="1"/><line x1="1888.5" y1="527" x2="1888.5" y2="534" stroke="#c8c8c8" stroke-width="1"/><path d="M51 190h4v1h-4zM55 190h1v4h-1zM56 193h5v1h-5zM61 193h1v3h-1zM62 195h5v1h-5zM67 195h1v3h-1zM68 197h5v1h-5zM73 197h1v3h-1zM74 199h5v1h-5zM79 199h1v4h-1zM80 202h5v1h-5zM85 202h1v3h-1zM86 204h5v1h-5zM91 204h1v3h-1zM92 206h5v1h-5zM97 206h1v3h-1zM98 208h6v1h-6zM104 208h1v4h-1zM105 211h5v1h-5zM110 211h1v3h-1zM111 213h5v1h-5zM116 213h1v3h-1zM117 215h5v1h-5zM122 215h1v3h-1zM123 217h5v1h-5zM128 217h1v4h-1zM129 220h5v1h-5zM134 220h1v3h-1zM135 222h5v1h-5zM140 222h1v3h-1zM141 224h5v1h-5zM146 224h1v3h-1zM147 226h6v1h-6zM153 226h1v4h-1zM154 229h5v1h-5zM159 229h1v3h-1zM160 231h5v1h-5zM165 231h1v3h-1zM166 233h5v1h-5zM171 233h1v3h-1zM172 235h5v1h-5zM177 235h1v3h-1zM178 237h5v1h-5zM183 237h1v4h-1zM184 240h5v1h-5zM189 240h1v3h-1zM190 242h5v1h-5zM195 242h1v3h-1zM196 244h6v1h-6zM202 244h1v3h-1zM203 246h5v1h-5zM208 246h1v4h-1zM209 249h5v1h-5zM214 249h1v3h-1zM215 251h5v1h-5zM220 251h1v3h-1zM221 253h5v1h-5zM226 253h1v3h-1zM227 255h5v1h-5zM232 255h1v4h-1zM233 258h5v1h-5zM238 258h1v3h-1zM239 260h5v1h-5zM244 260h1v3h-1zM245 262h6v1h-6zM251 262h1v3h-1zM252 264h5v1h-5zM257 264h1v4h-1zM258 267h5v1h-5zM263 267h1v3h-1zM264 269h5v1h-5zM269 269h1v3h-1zM270 271h5v1h-5zM275 271h1v3h-1zM276 273h5v1h-5zM281 273h1v4h-1zM282 276h5v1h-5zM287 276h1v3h-1zM288 278h5v1h-5zM293 278h1v3h-1zM294 280h5v1h-5zM299 280h1v3h-1zM300 282h6v1h-6zM306 282h1v4h-1zM307 285h5v1h-5zM312 285h1v3h-1zM313 287h5v1h-5zM318 287h1v3h-1zM319 289h5v1h-5zM324 289h1v3h-1zM325 291h5v1h-5zM330 291h1v4h-1zM331 294h5v1h-5zM336 294h1v3h-1zM337 296h5v1h-5zM342 296h1v3h-1zM343 298h5v1h-5zM348 298h1v3h-1zM349 300h6v1h-6zM355 300h1v4h-1zM356 303h5v1h-5zM361 303h1v3h-1zM362 305h5v1h-5zM367 305h1v3h-1zM368 307h5v1h-5zM373 307h1v3h-1zM374 309h5v1h-5zM379 309h1v3h-1zM380 311h5v1h-5zM385 311h1v4h-1zM386 314h5v1h-5zM391 314h1v3h-1zM392 316h5v1h-5zM397 316h1v3h-1zM398 318h6v1h-6zM404 318h1v3h-1zM405 320h5v1h-5zM410 320h1v4h-1zM411 323h5v1h-5zM416 323h1v3h-1zM417 325h5v1h-5zM422 325h1v3h-1zM423 327h5v1h-5zM428 327h1v3h-1zM429 329h5v1h-5zM434 329h1v4h-1zM435 332h5v1h-5zM440 332h1v3h-1zM441 334h5v1h-5zM446 334h1v3h-1zM447 336h6v1h-6zM453 336h1v3h-1zM454 338h5v1h-5zM459 338h1v4h-1zM460 341h5v1h-5zM465 341h1v3h-1zM466 343h5v1h-5zM471 343h1v3h-1zM472 345h5v1h-5zM477 345h1v3h-1zM478 347h5v1h-5zM483 347h1v4h-1zM484 350h5v1h-5zM489 350h1v3h-1zM490 352h5v1h-5zM495 352h1v3h-1zM496 354h6v1h-6zM502 354h1v3h-1zM503 356h5v1h-5zM508 356h1v4h-1zM509 359h5v1h-5zM514 359h1v3h-1zM515 361h5v1h-5zM520 361h1v3h-1zM521 363h5v1h-5zM526 363h1v3h-1zM527 365h5v1h-5zM532 365h1v4h-1zM533 368h5v1h-5zM538 368h1v3h-1zM539 370h5v1h-5zM544 370h1v3h-1zM545 372h6v1h-6zM551 372h1v3h-1zM552 374h5v1h-5zM557 374h1v4h-1zM558 377h5v1h-5zM563 377h1v3h-1zM564 379h5v1h-5zM569 379h1v3h-1zM570 381h5v1h-5zM575 381h1v3h-1zM576 383h5v1h-5zM581 383h1v3h-1zM582 385h5v1h-5zM587 385h1v4h-1zM588 388h5v1h-5zM593 388h1v3h-1zM594 390h6v1h-6zM600 390h1v3h-1zM601 392h5v1h-5zM606 392h1v3h-1zM607 394h5v1h-5zM612 394h1v4h-1zM613 397h5v1h-5zM618 397h1v3h-1zM619 399h5v1h-5zM624 399h1v3h-1zM625 401h5v1h-5zM630 401h1v3h-1zM631 403h5v1h-5zM636 403h1v4h-1zM637 406h5v1h-5zM642 406h1v3h-1zM643 408h6v1h-6zM649 408h1v3h-1zM650 410h5v1h-5zM655 410h1v3h-1zM656 412h5v1h-5zM661 412h1v4h-1zM662 415h5v1h-5zM667 415h1v3h-1zM668 417h5v1h-5zM673 417h1v3h-1zM674 419h5v1h-5zM679 419h1v3h-1zM680 421h5v1h-5zM685 421h1v4h-1zM686 424h5v1h-5zM691 424h1v3h-1zM692 426h6v1h-6zM698 426h1v3h-1zM699 428h5v1h-5zM704 428h1v3h-1zM705 430h5v1h-5zM710 430h1v4h-1zM711 433h5v1h-5zM716 433h1v3h-1zM717 435h5v1h-5zM722 435h1v3h-1zM723 437h5v1h-5zM728 437h1v3h-1zM729 439h5v1h-5zM734 439h1v4h-1zM735 442h5v1h-5zM740 442h1v3h-1zM741 444h5v1h-5zM746 444h1v3h-1zM747 446h6v1h-6zM753 446h1v3h-1zM754 448h5v1h-5zM759 448h1v4h-1zM760 451h5v1h-5zM765 451h1v3h-1zM766 453h5v1h-5zM771 453h1v3h-1zM772 455h5v1h-5zM777 455h1v3h-1zM778 457h5v1h-5zM783 457h1v3h-1zM784 459h5v1h-5zM789 459h1v4h-1zM790 462h5v1h-5zM795 462h1v3h-1zM796 464h6v1h-6zM802 464h1v3h-1zM803 466h5v1h-5zM808 466h1v3h-1zM809 468h5v1h-5zM814 468h1v4h-1zM815 471h5v1h-5zM820 471h1v3h-1zM821 473h5v1h-5zM826 473h1v3h-1zM827 475h5v1h-5zM832 475h1v3h-1zM833 477h5v1h-5zM838 477h1v4h-1zM839 480h5v1h-5zM844 480h1v3h-1zM845 482h6v1h-6zM851 482h1v3h-1zM852 484h5v1h-5zM857 484h1v3h-1zM858 486h5v1h-5zM863 486h1v4h-1zM864 489h5v1h-5zM869 489h1v3h-1zM870 491h5v1h-5zM875 491h1v3h-1zM876 493h5v1h-5zM881 493h1v3h-1zM882 495h5v1h-5zM887 495h1v4h-1zM888 498h5v1h-5zM893 498h1v3h-1zM894 500h6v1h-6zM900 500h1v3h-1zM901 502h5v1h-5zM906 502h1v3h-1zM907 504h5v1h-5zM912 504h1v4h-1zM913 507h5v1h-5zM918 507h1v3h-1zM919 509h5v1h-5zM924 509h1v3h-1zM925 511h5v1h-5zM930 511h1v3h-1zM931 513h5v1h-5zM936 513h1v4h-1zM937 516h5v1h-5zM942 516h1v3h-1zM943 518h6v1h-6zM949 518h1v3h-1zM950 520h5v1h-5zM955 520h1v3h-1zM956 522h5v1h-5zM961 522h1v4h-1zM962 525h5v1h-5zM967 525h1v3h-1zM968 527h921v1h-921z" fill="#0000ff"/><path d="M51 190h4v1h-4zM55 190h1v3h-1zM56 192h3v1h-3zM59 192h1v3h-1zM60 194h5v1h-5zM65 194h1v3h-1zM66 196h5v1h-5zM71 196h1v3h-1zM72 198h5v1h-5zM77 198h1v3h-1zM78 200h5v1h-5zM83 200h1v3h-1zM84 202h5v1h-5zM89 202h1v2h-1zM90 203h5v1h-5zM95 203h1v3h-1zM96 205h6v1h-6zM102 205h1v3h-1zM103 207h5v1h-5zM108 207h1v3h-1zM109 209h1v1h-1zM110 208h1v2h-1zM111 208h3v1h-3zM114 208h1v3h-1zM115 210h5v1h-5zM120 210h1v3h-1zM121 212h5v1h-5zM126 212h1v2h-1zM127 213h5v1h-5zM132 213h1v3h-1zM133 215h1v1h-1zM134 214h1v2h-1zM135 214h3v1h-3zM138 214h1v3h-1zM139 216h5v1h-5zM144 216h1v3h-1zM145 218h1v1h-1zM146 217h1v2h-1zM147 217h4v1h-4zM151 217h1v3h-1zM152 219h5v1h-5zM157 219h1v2h-1zM158 220h5v1h-5zM163 220h1v3h-1zM164 222h1v1h-1zM165 221h1v2h-1zM166 221h3v1h-3zM169 221h1v3h-1zM170 223h1v1h-1zM171 222h1v2h-1zM172 222h3v1h-3zM175 222h1v3h-1zM176 224h1v1h-1zM177 223h1v2h-1zM178 223h3v1h-3zM181 223h1v3h-1zM182 225h1v1h-1zM183 224h1v2h-1zM184 224h3v1h-3zM187 224h1v3h-1zM188 226h1v1h-1zM189 225h1v2h-1zM190 225h3v1h-3zM193 225h1v3h-1zM194 227h1v1h-1zM195 226h1v2h-1zM196 226h4v1h-4zM200 226h1v3h-1zM201 228h1v1h-1zM202 227h1v2h-1zM203 227h3v1h-3zM206 227h1v3h-1zM207 229h1v1h-1zM208 228h1v2h-1zM209 228h3v1h-3zM212 228h1v3h-1zM213 230h1v1h-1zM214 229h1v2h-1zM215 229h3v1h-3zM218 229h1v3h-1zM219 231h1v1h-1zM220 230h1v2h-1zM221 230h3v1h-3zM224 230h1v3h-1zM225 232h1v1h-1zM226 231h1v2h-1zM227 231h3v1h-3zM230 231h1v3h-1zM231 233h1v1h-1zM232 232h1v2h-1zM233 232h3v1h-3zM236 232h1v3h-1zM237 234h1v1h-1zM238 233h1v2h-1zM239 233h3v1h-3zM242 233h1v3h-1zM243 235h1v1h-1zM244 234h1v2h-1zM245 234h3v1h-3zM248 234h1v2h-1zM249 235h2v1h-2zM251 234h1v2h-1zM252 234h3v1h-3zM255 234h1v3h-1zM256 236h1v1h-1zM257 235h1v2h-1zM258 235h3v1h-3zM261 235h1v3h-1zM262 237h1v1h-1zM263 236h1v2h-1zM264 236h3v1h-3zM267 236h1v3h-1zM268 238h1v1h-1zM269 236h1v3h-1zM270 236h3v1h-3zM273 236h1v3h-1zM274 238h1v1h-1zM275 237h1v2h-1zM276 237h3v1h-3zM279 237h1v3h-1zM280 239h1v1h-1zM281 238h1v2h-1zM282 238h3v1h-3zM285 238h1v3h-1zM286 240h1v1h-1zM287 238h1v3h-1zM288 238h3v1h-3zM291 238h1v3h-1zM292 240h1v1h-1zM293 239h1v2h-1zM294 239h3v1h-3zM297 239h1v3h-1zM298 241h1v1h-1zM299 240h1v2h-1zM300 240h4v1h-4zM304 240h1v2h-1zM305 241h1v1h-1zM306 240h1v2h-1zM307 240h3v1h-3zM310 240h1v3h-1zM311 242h1v1h-1zM312 241h1v2h-1zM313 241h3v1h-3zM316 241h1v3h-1zM317 243h1v1h-1zM318 241h1v3h-1zM319 241h3v1h-3zM322 241h1v3h-1zM323 243h1v1h-1zM324 242h1v2h-1zM325 242h3v1h-3zM328 242h1v3h-1zM329 244h1v1h-1zM330 242h1v3h-1zM331 242h3v1h-3zM334 242h1v3h-1zM335 244h1v1h-1zM336 243h1v2h-1zM337 243h3v1h-3zM340 243h1v3h-1zM341 245h1v1h-1zM342 243h1v3h-1zM343 243h3v1h-3zM346 243h1v3h-1zM347 245h1v1h-1zM348 244h1v2h-1zM349 244h4v1h-4zM353 244h1v2h-1zM354 245h1v1h-1zM355 244h1v2h-1zM356 244h3v1h-3zM359 244h1v3h-1zM360 246h1v1h-1zM361 244h1v3h-1zM362 244h3v1h-3zM365 244h1v3h-1zM366 246h1v1h-1zM367 245h1v2h-1zM368 245h3v1h-3zM371 245h1v3h-1zM372 247h1v1h-1zM373 245h1v3h-1zM374 245h3v1h-3zM377 245h1v3h-1zM378 247h1v1h-1zM379 246h1v2h-1zM380 246h3v1h-3zM383 246h1v2h-1zM384 247h1v1h-1zM385 246h1v2h-1zM386 246h3v1h-3zM389 246h1v3h-1zM390 248h1v1h-1zM391 246h1v3h-1zM392 246h3v1h-3zM395 246h1v3h-1zM396 248h1v1h-1zM397 247h1v2h-1zM398 247h4v1h-4zM402 247h1v3h-1zM403 249h1v1h-1zM404 247h1v3h-1zM405 247h3v1h-3zM408 247h1v3h-1zM409 249h1v1h-1zM410 247h1v3h-1zM411 247h3v1h-3zM414 247h1v3h-1zM415 249h1v1h-1zM416 248h1v2h-1zM417 248h3v1h-3zM420 248h1v2h-1zM421 249h1v1h-1zM422 248h1v2h-1zM423 248h3v1h-3zM426 248h1v3h-1zM427 250h1v1h-1zM428 248h1v3h-1zM429 248h3v1h-3zM432 248h1v3h-1zM433 250h1v1h-1zM434 248h1v3h-1zM435 248h3v1h-3zM438 248h1v3h-1zM439 250h1v1h-1zM440 249h1v2h-1zM441 249h3v1h-3zM444 249h1v3h-1zM445 251h1v1h-1zM446 249h1v3h-1zM447 249h4v1h-4zM451 249h1v3h-1zM452 251h1v1h-1zM453 249h1v3h-1zM454 249h3v1h-3zM457 249h1v3h-1zM458 251h1v1h-1zM459 249h1v3h-1zM460 249h3v1h-3zM463 249h1v3h-1zM464 251h1v1h-1zM465 250h1v2h-1zM466 250h3v1h-3zM469 250h1v3h-1zM470 252h1v1h-1zM471 250h1v3h-1zM472 250h3v1h-3zM475 250h1v3h-1zM476 252h1v1h-1zM477 250h1v3h-1zM478 250h3v1h-3zM481 250h1v3h-1zM482 252h1v1h-1zM483 250h1v3h-1zM484 250h3v1h-3zM487 250h1v3h-1zM488 252h1v1h-1zM489 251h1v2h-1zM490 251h3v1h-3zM493 251h1v2h-1zM494 252h1v1h-1zM495 251h1v2h-1zM496 251h4v1h-4zM500 251h1v3h-1zM501 253h1v1h-1zM502 251h1v3h-1zM503 251h3v1h-3zM506 251h1v3h-1zM507 253h1v1h-1zM508 251h1v3h-1zM509 251h3v1h-3zM512 251h1v3h-1zM513 253h1v1h-1zM514 251h1v3h-1zM515 251h3v1h-3zM518 251h1v3h-1zM519 253h1v1h-1zM520 252h1v2h-1zM521 252h3v1h-3zM524 252h1v2h-1zM525 253h1v1h-1zM526 252h1v2h-1zM527 252h3v1h-3zM530 252h1v3h-1zM531 254h1v1h-1zM532 252h1v3h-1zM533 252h3v1h-3zM536 252h1v3h-1zM537 254h1v1h-1zM538 252h1v3h-1zM539 252h3v1h-3zM542 252h1v3h-1zM543 254h1v1h-1zM544 252h1v3h-1zM545 252h4v1h-4zM549 252h1v3h-1zM550 254h1v1h-1zM551 252h1v3h-1zM552 252h3v1h-3zM555 252h1v3h-1zM556 254h1v1h-1zM557 252h1v3h-1zM558 252h3v1h-3zM561 252h1v3h-1zM562 254h1v1h-1zM563 253h1v2h-1zM564 253h3v1h-3zM567 253h1v2h-1zM568 254h1v1h-1zM569 253h1v2h-1zM570 253h3v1h-3zM573 253h1v3h-1zM574 255h1v1h-1zM575 253h1v3h-1zM576 253h3v1h-3zM579 253h1v3h-1zM580 255h1v1h-1zM581 253h1v3h-1zM582 253h3v1h-3zM585 253h1v3h-1zM586 255h1v1h-1zM587 253h1v3h-1zM588 253h3v1h-3zM591 253h1v3h-1zM592 255h1v1h-1zM593 253h1v3h-1zM594 253h4v1h-4zM598 253h1v3h-1zM599 255h1v1h-1zM600 253h1v3h-1zM601 253h3v1h-3zM604 253h1v3h-1zM605 255h1v1h-1zM606 253h1v3h-1zM607 253h3v1h-3zM610 253h1v3h-1zM611 255h1v1h-1zM612 254h1v2h-1zM613 254h3v1h-3zM616 254h1v2h-1zM617 255h1v1h-1zM618 254h1v2h-1zM619 254h3v1h-3zM622 254h1v3h-1zM623 256h1v1h-1zM624 254h1v3h-1zM625 254h3v1h-3zM628 254h1v3h-1zM629 256h1v1h-1zM630 254h1v3h-1zM631 254h3v1h-3zM634 254h1v3h-1zM635 256h1v1h-1zM636 254h1v3h-1zM637 254h3v1h-3zM640 254h1v3h-1zM641 256h1v1h-1zM642 254h1v3h-1zM643 254h4v1h-4zM647 254h1v3h-1zM648 256h1v1h-1zM649 254h1v3h-1zM650 254h3v1h-3zM653 254h1v3h-1zM654 256h1v1h-1zM655 254h1v3h-1zM656 254h3v1h-3zM659 254h1v3h-1zM660 256h1v1h-1zM661 254h1v3h-1zM662 254h3v1h-3zM665 254h1v3h-1zM666 256h1v1h-1zM667 254h1v3h-1zM668 254h3v1h-3zM671 254h1v3h-1zM672 256h1v1h-1zM673 254h1v3h-1zM674 254h3v1h-3zM677 254h1v3h-1zM678 256h1v1h-1zM679 255h1v2h-1zM680 255h3v1h-3zM683 255h1v2h-1zM684 256h1v1h-1zM685 255h1v2h-1zM686 255h3v1h-3zM689 255h1v2h-1zM690 256h1v1h-1zM691 255h1v2h-1zM692 255h3v1h-3zM695 255h1v3h-1zM696 257h2v1h-2zM698 255h1v3h-1zM699 255h3v1h-3zM702 255h1v3h-1zM703 257h1v1h-1zM704 255h1v3h-1zM705 255h3v1h-3zM708 255h1v3h-1zM709 257h1v1h-1zM710 255h1v3h-1zM711 255h3v1h-3zM714 255h1v3h-1zM715 257h1v1h-1zM716 255h1v3h-1zM717 255h3v1h-3zM720 255h1v3h-1zM721 257h1v1h-1zM722 255h1v3h-1zM723 255h3v1h-3zM726 255h1v3h-1zM727 257h1v1h-1zM728 255h1v3h-1zM729 255h3v1h-3zM732 255h1v3h-1zM733 257h1v1h-1zM734 255h1v3h-1zM735 255h3v1h-3zM738 255h1v3h-1zM739 257h1v1h-1zM740 255h1v3h-1zM741 255h3v1h-3zM744 255h1v3h-1zM745 257h1v1h-1zM746 255h1v3h-1zM747 255h4v1h-4zM751 255h1v3h-1zM752 257h1v1h-1zM753 255h1v3h-1zM754 255h3v1h-3zM757 255h1v3h-1zM758 257h1v1h-1zM759 255h1v3h-1zM760 255h3v1h-3zM763 255h1v3h-1zM764 257h1v1h-1zM765 255h1v3h-1zM766 255h3v1h-3zM769 255h1v3h-1zM770 257h1v1h-1zM771 255h1v3h-1zM772 255h3v1h-3zM775 255h1v3h-1zM776 257h1v1h-1zM777 255h1v3h-1zM778 255h3v1h-3zM781 255h1v3h-1zM782 257h1v1h-1zM783 255h1v3h-1zM784 255h3v1h-3zM787 255h1v3h-1zM788 257h1v1h-1zM789 255h1v3h-1zM790 255h3v1h-3zM793 255h1v3h-1zM794 257h1v1h-1zM795 256h1v2h-1zM796 256h4v1h-4zM800 256h1v2h-1zM801 257h1v1h-1zM802 256h1v2h-1zM803 256h3v1h-3zM806 256h1v2h-1zM807 257h1v1h-1zM808 256h1v2h-1zM809 256h3v1h-3zM812 256h1v2h-1zM813 257h1v1h-1zM814 256h1v2h-1zM815 256h3v1h-3zM818 256h1v3h-1zM819 258h1v1h-1zM820 256h1v3h-1zM821 256h3v1h-3zM824 256h1v3h-1zM825 258h1v1h-1zM826 256h1v3h-1zM827 256h3v1h-3zM830 256h1v3h-1zM831 258h1v1h-1zM832 256h1v3h-1zM833 256h3v1h-3zM836 256h1v3h-1zM837 258h1v1h-1zM838 256h1v3h-1zM839 256h3v1h-3zM842 256h1v3h-1zM843 258h1v1h-1zM844 256h1v3h-1zM845 256h4v1h-4zM849 256h1v3h-1zM850 258h1v1h-1zM851 256h1v3h-1zM852 256h3v1h-3zM855 256h1v3h-1zM856 258h1v1h-1zM857 256h1v3h-1zM858 256h3v1h-3zM861 256h1v3h-1zM862 258h1v1h-1zM863 256h1v3h-1zM864 256h3v1h-3zM867 256h1v3h-1zM868 258h1v1h-1zM869 256h1v3h-1zM870 256h3v1h-3zM873 256h1v3h-1zM874 258h1v1h-1zM875 256h1v3h-1zM876 256h3v1h-3zM879 256h1v3h-1zM880 258h1v1h-1zM881 256h1v3h-1zM882 256h3v1h-3zM885 256h1v3h-1zM886 258h1v1h-1zM887 256h1v3h-1zM888 256h3v1h-3zM891 256h1v3h-1zM892 258h1v1h-1zM893 256h1v3h-1zM894 256h4v1h-4zM898 256h1v3h-1zM899 258h1v1h-1zM900 256h1v3h-1zM901 256h3v1h-3zM904 256h1v3h-1zM905 258h1v1h-1zM906 256h1v3h-1zM907 256h3v1h-3zM910 256h1v3h-1zM911 258h1v1h-1zM912 256h1v3h-1zM913 256h3v1h-3zM916 256h1v3h-1zM917 258h1v1h-1zM918 256h1v3h-1zM919 256h3v1h-3zM922 256h1v3h-1zM923 258h1v1h-1zM924 256h1v3h-1zM925 256h3v1h-3zM928 256h1v3h-1zM929 258h1v1h-1zM930 256h1v3h-1zM931 256h3v1h-3zM934 256h1v3h-1zM935 258h1v1h-1zM936 256h1v3h-1zM937 256h3v1h-3zM940 256h1v3h-1zM941 258h1v1h-1zM942 256h1v3h-1zM943 256h4v1h-4zM947 256h1v3h-1zM948 258h1v1h-1zM949 256h1v3h-1zM950 256h3v1h-3zM953 256h1v3h-1zM954 258h1v1h-1zM955 256h1v3h-1zM956 256h3v1h-3zM959 256h1v3h-1zM960 258h1v1h-1zM961 256h1v3h-1zM962 256h3v1h-3zM965 256h1v3h-1zM966 258h1v1h-1zM967 256h1v3h-1zM968 256h3v1h-3zM971 256h1v3h-1zM972 258h1v1h-1zM973 256h1v3h-1zM974 256h3v1h-3zM977 256h1v3h-1zM978 258h1v1h-1zM979 256h1v3h-1zM980 256h3v1h-3zM983 256h1v3h-1zM984 258h1v1h-1zM985 256h1v3h-1zM986 256h3v1h-3zM989 256h1v3h-1zM990 258h1v1h-1zM991 256h1v3h-1zM992 256h4v1h-4zM996 256h1v3h-1zM997 258h1v1h-1zM998 256h1v3h-1zM999 256h3v1h-3zM1002 256h1v3h-1zM1003 258h1v1h-1zM1004 256h1v3h-1zM1005 256h3v1h-3zM1008 256h1v3h-1zM1009 258h1v1h-1zM1010 256h1v3h-1zM1011 256h3v1h-3zM1014 256h1v3h-1zM1015 258h1v1h-1zM1016 256h1v3h-1zM1017 256h3v1h-3zM1020 256h1v3h-1zM1021 258h1v1h-1zM1022 256h1v3h-1zM1023 256h3v1h-3zM1026 256h1v3h-1zM1027 258h1v1h-1zM1028 256h1v3h-1zM1029 256h3v1h-3zM1032 256h1v3h-1zM1033 258h1v1h-1zM1034 256h1v3h-1zM1035 256h3v1h-3zM1038 256h1v3h-1zM1039 258h1v1h-1zM1040 256h1v3h-1zM1041 256h4v1h-4zM1045 256h1v3h-1zM1046 258h1v1h-1zM1047 256h1v3h-1zM1048 256h3v1h-3zM1051 256h1v3h-1zM1052 258h1v1h-1zM1053 256h1v3h-1zM1054 256h3v1h-3zM1057 256h1v3h-1zM1058 258h1v1h-1zM1059 256h1v3h-1zM1060 256h3v1h-3zM1063 256h1v3h-1zM1064 258h1v1h-1zM1065 256h1v3h-1zM1066 256h3v1h-3zM1069 256h1v3h-1zM1070 258h1v1h-1zM1071 256h1v3h-1zM1072 256h3v1h-3zM1075 256h1v3h-1zM1076 258h1v1h-1zM1077 256h1v3h-1zM1078 256h3v1h-3zM1081 256h1v3h-1zM1082 258h1v1h-1zM1083 256h1v3h-1zM1084 256h3v1h-3zM1087 256h1v3h-1zM1088 258h1v1h-1zM1089 256h1v3h-1zM1090 256h4v1h-4zM1094 256h1v3h-1zM1095 258h1v1h-1zM1096 256h1v3h-1zM1097 256h3v1h-3zM1100 256h1v3h-1zM1101 258h1v1h-1zM1102 256h1v3h-1zM1103 256h3v1h-3zM1106 256h1v3h-1zM1107 258h1v1h-1zM1108 256h1v3h-1zM1109 256h3v1h-3zM1112 256h1v3h-1zM1113 258h1v1h-1zM1114 256h1v3h-1zM1115 256h3v1h-3zM1118 256h1v3h-1zM1119 258h1v1h-1zM1120 256h1v3h-1zM1121 256h3v1h-3zM1124 256h1v3h-1zM1125 258h1v1h-1zM1126 256h1v3h-1zM1127 256h3v1h-3zM1130 256h1v3h-1zM1131 258h1v1h-1zM1132 256h1v3h-1zM1133 256h3v1h-3zM1136 256h1v3h-1zM1137 258h1v1h-1zM1138 256h1v3h-1zM1139 256h3v1h-3zM1142 256h1v3h-1zM1143 258h2v1h-2zM1145 257h1v2h-1zM1146 257h3v1h-3zM1149 257h1v2h-1zM1150 258h1v1h-1zM1151 257h1v2h-1zM1152 257h3v1h-3zM1155 257h1v2h-1zM1156 258h1v1h-1zM1157 257h1v2h-1zM1158 257h3v1h-3zM1161 257h1v2h-1zM1162 258h1v1h-1zM1163 257h1v2h-1zM1164 257h3v1h-3zM1167 257h1v2h-1zM1168 258h1v1h-1zM1169 257h1v2h-1zM1170 257h3v1h-3zM1173 257h1v2h-1zM1174 258h1v1h-1zM1175 257h1v2h-1zM1176 257h3v1h-3zM1179 257h1v2h-1zM1180 258h1v1h-1zM1181 257h1v2h-1zM1182 257h3v1h-3zM1185 257h1v2h-1zM1186 258h1v1h-1zM1187 257h1v2h-1zM1188 257h3v1h-3zM1191 257h1v2h-1zM1192 258h2v1h-2zM1194 257h1v2h-1zM1195 257h3v1h-3zM1198 257h1v2h-1zM1199 258h1v1h-1zM1200 257h1v2h-1zM1201 257h3v1h-3zM1204 257h1v2h-1zM1205 258h1v1h-1zM1206 257h1v2h-1zM1207 257h3v1h-3zM1210 257h1v2h-1zM1211 258h1v1h-1zM1212 257h1v2h-1zM1213 257h3v1h-3zM1216 257h1v2h-1zM1217 258h1v1h-1zM1218 257h1v2h-1zM1219 257h3v1h-3zM1222 257h1v2h-1zM1223 258h1v1h-1zM1224 257h1v2h-1zM1225 257h3v1h-3zM1228 257h1v2h-1zM1229 258h1v1h-1zM1230 257h1v2h-1zM1231 257h3v1h-3zM1234 257h1v2h-1zM1235 258h1v1h-1zM1236 257h1v2h-1zM1237 257h3v1h-3zM1240 257h1v2h-1zM1241 258h1v1h-1zM1242 257h1v2h-1zM1243 257h4v1h-4zM1247 257h1v2h-1zM1248 258h1v1h-1zM1249 257h1v2h-1zM1250 257h3v1h-3zM1253 257h1v2h-1zM1254 258h1v1h-1zM1255 257h1v2h-1zM1256 257h3v1h-3zM1259 257h1v2h-1zM1260 258h1v1h-1zM1261 257h1v2h-1zM1262 257h3v1h-3zM1265 257h1v2h-1zM1266 258h1v1h-1zM1267 257h1v2h-1zM1268 257h3v1h-3zM1271 257h1v2h-1zM1272 258h1v1h-1zM1273 257h1v2h-1zM1274 257h3v1h-3zM1277 257h1v2h-1zM1278 258h1v1h-1zM1279 257h1v2h-1zM1280 257h3v1h-3zM1283 257h1v2h-1zM1284 258h1v1h-1zM1285 257h1v2h-1zM1286 257h3v1h-3zM1289 257h1v2h-1zM1290 258h1v1h-1zM1291 257h1v2h-1zM1292 257h4v1h-4zM1296 257h1v2h-1zM1297 258h1v1h-1zM1298 257h1v2h-1zM1299 257h3v1h-3zM1302 257h1v2h-1zM1303 258h1v1h-1zM1304 257h1v2h-1zM1305 257h3v1h-3zM1308 257h1v3h-1zM1309 259h1v1h-1zM1310 257h1v3h-1zM1311 257h3v1h-3zM1314 257h1v3h-1zM1315 259h1v1h-1zM1316 257h1v3h-1zM1317 257h3v1h-3zM1320 257h1v3h-1zM1321 259h1v1h-1zM1322 257h1v3h-1zM1323 257h3v1h-3zM1326 257h1v3h-1zM1327 259h1v1h-1zM1328 257h1v3h-1zM1329 257h3v1h-3zM1332 257h1v3h-1zM1333 259h1v1h-1zM1334 257h1v3h-1zM1335 257h3v1h-3zM1338 257h1v3h-1zM1339 259h1v1h-1zM1340 257h1v3h-1zM1341 257h4v1h-4zM1345 257h1v3h-1zM1346 259h1v1h-1zM1347 257h1v3h-1zM1348 257h3v1h-3zM1351 257h1v3h-1zM1352 259h1v1h-1zM1353 257h1v3h-1zM1354 257h3v1h-3zM1357 257h1v3h-1zM1358 259h1v1h-1zM1359 257h1v3h-1zM1360 257h3v1h-3zM1363 257h1v3h-1zM1364 259h1v1h-1zM1365 257h1v3h-1zM1366 257h3v1h-3zM1369 257h1v3h-1zM1370 259h1v1h-1zM1371 257h1v3h-1zM1372 257h3v1h-3zM1375 257h1v3h-1zM1376 259h1v1h-1zM1377 257h1v3h-1zM1378 257h3v1h-3zM1381 257h1v3h-1zM1382 259h1v1h-1zM1383 257h1v3h-1zM1384 257h3v1h-3zM1387 257h1v3h-1zM1388 259h1v1h-1zM1389 257h1v3h-1zM1390 257h4v1h-4zM1394 257h1v3h-1zM1395 259h1v1h-1zM1396 257h1v3h-1zM1397 257h3v1h-3zM1400 257h1v3h-1zM1401 259h1v1h-1zM1402 257h1v3h-1zM1403 257h3v1h-3zM1406 257h1v3h-1zM1407 259h1v1h-1zM1408 257h1v3h-1zM1409 257h3v1h-3zM1412 257h1v3h-1zM1413 259h1v1h-1zM1414 257h1v3h-1zM1415 257h3v1h-3zM1418 257h1v3h-1zM1419 259h1v1h-1zM1420 257h1v3h-1zM1421 257h3v1h-3zM1424 257h1v3h-1zM1425 259h1v1h-1zM1426 257h1v3h-1zM1427 257h3v1h-3zM1430 257h1v3h-1zM1431 259h1v1h-1zM1432 257h1v3h-1zM1433 257h3v1h-3zM1436 257h1v3h-1zM1437 259h1v1h-1zM1438 257h1v3h-1zM1439 257h4v1h-4zM1443 257h1v3h-1zM1444 259h1v1h-1zM1445 257h1v3h-1zM1446 257h3v1h-3zM1449 257h1v3h-1zM1450 259h1v1h-1zM1451 257h1v3h-1zM1452 257h3v1h-3zM1455 257h1v3h-1zM1456 259h1v1h-1zM1457 257h1v3h-1zM1458 257h3v1h-3zM1461 257h1v3h-1zM1462 259h1v1h-1zM1463 257h1v3h-1zM1464 257h3v1h-3zM1467 257h1v3h-1zM1468 259h1v1h-1zM1469 257h1v3h-1zM1470 257h3v1h-3zM1473 257h1v3h-1zM1474 259h1v1h-1zM1475 257h1v3h-1zM1476 257h3v1h-3zM1479 257h1v3h-1zM1480 259h1v1h-1zM1481 257h1v3h-1zM1482 257h3v1h-3zM1485 257h1v3h-1zM1486 259h1v1h-1zM1487 257h1v3h-1zM1488 257h4v1h-4zM1492 257h1v3h-1zM1493 259h1v1h-1zM1494 257h1v3h-1zM1495 257h3v1h-3zM1498 257h1v3h-1zM1499 259h1v1h-1zM1500 257h1v3h-1zM1501 257h3v1h-3zM1504 257h1v3h-1zM1505 259h1v1h-1zM1506 257h1v3h-1zM1507 257h3v1h-3zM1510 257h1v3h-1zM1511 259h1v1h-1zM1512 257h1v3h-1zM1513 257h3v1h-3zM1516 257h1v3h-1zM1517 259h1v1h-1zM1518 257h1v3h-1zM1519 257h3v1h-3zM1522 257h1v3h-1zM1523 259h1v1h-1zM1524 257h1v3h-1zM1525 257h3v1h-3zM1528 257h1v3h-1zM1529 259h1v1h-1zM1530 257h1v3h-1zM1531 257h3v1h-3zM1534 257h1v3h-1zM1535 259h1v1h-1zM1536 257h1v3h-1zM1537 257h4v1h-4zM1541 257h1v3h-1zM1542 259h1v1h-1zM1543 257h1v3h-1zM1544 257h3v1h-3zM1547 257h1v3h-1zM1548 259h1v1h-1zM1549 257h1v3h-1zM1550 257h3v1h-3zM1553 257h1v3h-1zM1554 259h1v1h-1zM1555 257h1v3h-1zM1556 257h3v1h-3zM1559 257h1v3h-1zM1560 259h1v1h-1zM1561 257h1v3h-1zM1562 257h3v1h-3zM1565 257h1v3h-1zM1566 259h1v1h-1zM1567 257h1v3h-1zM1568 257h3v1h-3zM1571 257h1v3h-1zM1572 259h1v1h-1zM1573 257h1v3h-1zM1574 257h3v1h-3zM1577 257h1v3h-1zM1578 259h1v1h-1zM1579 257h1v3h-1zM1580 257h3v1h-3zM1583 257h1v3h-1zM1584 259h1v1h-1zM1585 257h1v3h-1zM1586 257h3v1h-3zM1589 257h1v3h-1zM1590 259h2v1h-2zM1592 257h1v3h-1zM1593 257h3v1h-3zM1596 257h1v3h-1zM1597 259h1v1h-1zM1598 257h1v3h-1zM1599 257h3v1h-3zM1602 257h1v3h-1zM1603 259h1v1h-1zM1604 257h1v3h-1zM1605 257h3v1h-3zM1608 257h1v3h-1zM1609 259h1v1h-1zM1610 257h1v3h-1zM1611 257h3v1h-3zM1614 257h1v3h-1zM1615 259h1v1h-1zM1616 257h1v3h-1zM1617 257h3v1h-3zM1620 257h1v3h-1zM1621 259h1v1h-1zM1622 257h1v3h-1zM1623 257h3v1h-3zM1626 257h1v3h-1zM1627 259h1v1h-1zM1628 257h1v3h-1zM1629 257h3v1h-3zM1632 257h1v3h-1zM1633 259h1v1h-1zM1634 257h1v3h-1zM1635 257h3v1h-3zM1638 257h1v3h-1zM1639 259h2v1h-2zM1641 257h1v3h-1zM1642 257h3v1h-3zM1645 257h1v3h-1zM1646 259h1v1h-1zM1647 257h1v3h-1zM1648 257h3v1h-3zM1651 257h1v3h-1zM1652 259h1v1h-1zM1653 257h1v3h-1zM1654 257h3v1h-3zM1657 257h1v3h-1zM1658 259h1v1h-1zM1659 257h1v3h-1zM1660 257h3v1h-3zM1663 257h1v3h-1zM1664 259h1v1h-1zM1665 257h1v3h-1zM1666 257h3v1h-3zM1669 257h1v3h-1zM1670 259h1v1h-1zM1671 257h1v3h-1zM1672 257h3v1h-3zM1675 257h1v3h-1zM1676 259h1v1h-1zM1677 257h1v3h-1zM1678 257h3v1h-3zM1681 257h1v3h-1zM1682 259h1v1h-1zM1683 257h1v3h-1zM1684 257h3v1h-3zM1687 257h1v3h-1zM1688 259h1v1h-1zM1689 257h1v3h-1zM1690 257h4v1h-4zM1694 257h1v3h-1zM1695 259h1v1h-1zM1696 257h1v3h-1zM1697 257h3v1h-3zM1700 257h1v3h-1zM1701 259h1v1h-1zM1702 257h1v3h-1zM1703 257h3v1h-3zM1706 257h1v3h-1zM1707 259h1v1h-1zM1708 257h1v3h-1zM1709 257h3v1h-3zM1712 257h1v3h-1zM1713 259h1v1h-1zM1714 257h1v3h-1zM1715 257h3v1h-3zM1718 257h1v3h-1zM1719 259h1v1h-1zM1720 257h1v3h-1zM1721 257h3v1h-3zM1724 257h1v3h-1zM1725 259h1v1h-1zM1726 257h1v3h-1zM1727 257h3v1h-3zM1730 257h1v3h-1zM1731 259h1v1h-1zM1732 257h1v3h-1zM1733 257h3v1h-3zM1736 257h1v3h-1zM1737 259h1v1h-1zM1738 257h1v3h-1zM1739 257h4v1h-4zM1743 257h1v3h-1zM1744 259h1v1h-1zM1745 257h1v3h-1zM1746 257h3v1h-3zM1749 257h1v3h-1zM1750 259h1v1h-1zM1751 257h1v3h-1zM1752 257h3v1h-3zM1755 257h1v3h-1zM1756 259h1v1h-1zM1757 257h1v3h-1zM1758 257h3v1h-3zM1761 257h1v3h-1zM1762 259h1v1h-1zM1763 257h1v3h-1zM1764 257h3v1h-3zM1767 257h1v3h-1zM1768 259h1v1h-1zM1769 257h1v3h-1zM1770 257h3v1h-3zM1773 257h1v3h-1zM1774 259h1v1h-1zM1775 257h1v3h-1zM1776 257h3v1h-3zM1779 257h1v3h-1zM1780 259h1v1h-1zM1781 257h1v3h-1zM1782 257h3v1h-3zM1785 257h1v3h-1zM1786 259h1v1h-1zM1787 257h1v3h-1zM1788 257h4v1h-4zM1792 257h1v3h-1zM1793 259h1v1h-1zM1794 257h1v3h-1zM1795 257h3v1h-3zM1798 257h1v3h-1zM1799 259h1v1h-1zM1800 257h1v3h-1zM1801 257h3v1h-3zM1804 257h1v3h-1zM1805 259h1v1h-1zM1806 257h1v3h-1zM1807 257h3v1h-3zM1810 257h1v3h-1zM1811 259h1v1h-1zM1812 257h1v3h-1zM1813 257h3v1h-3zM1816 257h1v3h-1zM1817 259h1v1h-1zM1818 257h1v3h-1zM1819 257h3v1h-3zM1822 257h1v3h-1zM1823 259h1v1h-1zM1824 257h1v3h-1zM1825 257h3v1h-3zM1828 257h1v3h-1zM1829 259h1v1h-1zM1830 257h1v3h-1zM1831 257h3v1h-3zM1834 257h1v3h-1zM1835 259h1v1h-1zM1836 257h1v3h-1zM1837 257h4v1h-4zM1841 257h1v3h-1zM1842 259h1v1h-1zM1843 257h1v3h-1zM1844 257h3v1h-3zM1847 257h1v3h-1zM1848 259h1v1h-1zM1849 257h1v3h-1zM1850 257h3v1h-3zM1853 257h1v3h-1zM1854 259h1v1h-1zM1855 257h1v3h-1zM1856 257h3v1h-3zM1859 257h1v3h-1zM1860 259h1v1h-1zM1861 257h1v3h-1zM1862 257h3v1h-3zM1865 257h1v3h-1zM1866 259h1v1h-1zM1867 257h1v3h-1zM1868 257h3v1h-3zM1871 257h1v3h-1zM1872 259h1v1h-1zM1873 257h1v3h-1zM1874 257h3v1h-3zM1877 257h1v3h-1zM1878 259h1v1h-1zM1879 257h1v3h-1zM1880 257h3v1h-3zM1883 257h1v3h-1zM1884 259h1v1h-1zM1885 257h1v3h-1zM1886 257h3v1h-3z" fill="#00ff00"/></svg>
<div style="font:14px 'Liberation Sans',sans-serif;letter-spacing:-0.5px;-webkit-text-stroke:0.25px;color:#d4d4d4;white-space:nowrap;position:absolute;right:1865px;top:10.0px;text-align:right">0.5V</div>
<div style="font:14px 'Liberation Sans',sans-serif;letter-spacing:-0.5px;-webkit-text-stroke:0.25px;color:#d4d4d4;white-space:nowrap;position:absolute;right:1865px;top:44.0px;text-align:right">0.0V</div>
<div style="font:14px 'Liberation Sans',sans-serif;letter-spacing:-0.5px;-webkit-text-stroke:0.25px;color:#d4d4d4;white-space:nowrap;position:absolute;right:1865px;top:77.0px;text-align:right">-0.5V</div>
<div style="font:14px 'Liberation Sans',sans-serif;letter-spacing:-0.5px;-webkit-text-stroke:0.25px;color:#d4d4d4;white-space:nowrap;position:absolute;right:1865px;top:111.0px;text-align:right">-1.0V</div>
<div style="font:14px 'Liberation Sans',sans-serif;letter-spacing:-0.5px;-webkit-text-stroke:0.25px;color:#d4d4d4;white-space:nowrap;position:absolute;right:1865px;top:145.0px;text-align:right">-1.5V</div>
<div style="font:14px 'Liberation Sans',sans-serif;letter-spacing:-0.5px;-webkit-text-stroke:0.25px;color:#d4d4d4;white-space:nowrap;position:absolute;right:1865px;top:178.0px;text-align:right">-2.0V</div>
<div style="font:14px 'Liberation Sans',sans-serif;letter-spacing:-0.5px;-webkit-text-stroke:0.25px;color:#d4d4d4;white-space:nowrap;position:absolute;right:1865px;top:212.0px;text-align:right">-2.5V</div>
<div style="font:14px 'Liberation Sans',sans-serif;letter-spacing:-0.5px;-webkit-text-stroke:0.25px;color:#d4d4d4;white-space:nowrap;position:absolute;right:1865px;top:245.0px;text-align:right">-3.0V</div>
<div style="font:14px 'Liberation Sans',sans-serif;letter-spacing:-0.5px;-webkit-text-stroke:0.25px;color:#d4d4d4;white-space:nowrap;position:absolute;right:1865px;top:279.0px;text-align:right">-3.5V</div>
<div style="font:14px 'Liberation Sans',sans-serif;letter-spacing:-0.5px;-webkit-text-stroke:0.25px;color:#d4d4d4;white-space:nowrap;position:absolute;right:1865px;top:313.0px;text-align:right">-4.0V</div>
<div style="font:14px 'Liberation Sans',sans-serif;letter-spacing:-0.5px;-webkit-text-stroke:0.25px;color:#d4d4d4;white-space:nowrap;position:absolute;right:1865px;top:346.0px;text-align:right">-4.5V</div>
<div style="font:14px 'Liberation Sans',sans-serif;letter-spacing:-0.5px;-webkit-text-stroke:0.25px;color:#d4d4d4;white-space:nowrap;position:absolute;right:1865px;top:380.0px;text-align:right">-5.0V</div>
<div style="font:14px 'Liberation Sans',sans-serif;letter-spacing:-0.5px;-webkit-text-stroke:0.25px;color:#d4d4d4;white-space:nowrap;position:absolute;left:-1.0px;width:80px;text-align:center;top:396.1px">0ms</div>
<div style="font:14px 'Liberation Sans',sans-serif;letter-spacing:-0.5px;-webkit-text-stroke:0.25px;color:#d4d4d4;white-space:nowrap;position:absolute;left:182.7px;width:80px;text-align:center;top:396.1px">30ms</div>
<div style="font:14px 'Liberation Sans',sans-serif;letter-spacing:-0.5px;-webkit-text-stroke:0.25px;color:#d4d4d4;white-space:nowrap;position:absolute;left:366.4px;width:80px;text-align:center;top:396.1px">60ms</div>
<div style="font:14px 'Liberation Sans',sans-serif;letter-spacing:-0.5px;-webkit-text-stroke:0.25px;color:#d4d4d4;white-space:nowrap;position:absolute;left:550.1px;width:80px;text-align:center;top:396.1px">90ms</div>
<div style="font:14px 'Liberation Sans',sans-serif;letter-spacing:-0.5px;-webkit-text-stroke:0.25px;color:#d4d4d4;white-space:nowrap;position:absolute;left:733.8px;width:80px;text-align:center;top:396.1px">120ms</div>
<div style="font:14px 'Liberation Sans',sans-serif;letter-spacing:-0.5px;-webkit-text-stroke:0.25px;color:#d4d4d4;white-space:nowrap;position:absolute;left:917.5px;width:80px;text-align:center;top:396.1px">150ms</div>
<div style="font:14px 'Liberation Sans',sans-serif;letter-spacing:-0.5px;-webkit-text-stroke:0.25px;color:#d4d4d4;white-space:nowrap;position:absolute;left:1101.2px;width:80px;text-align:center;top:396.1px">180ms</div>
<div style="font:14px 'Liberation Sans',sans-serif;letter-spacing:-0.5px;-webkit-text-stroke:0.25px;color:#d4d4d4;white-space:nowrap;position:absolute;left:1284.9px;width:80px;text-align:center;top:396.1px">210ms</div>
<div style="font:14px 'Liberation Sans',sans-serif;letter-spacing:-0.5px;-webkit-text-stroke:0.25px;color:#d4d4d4;white-space:nowrap;position:absolute;left:1468.6px;width:80px;text-align:center;top:396.1px">240ms</div>
<div style="font:14px 'Liberation Sans',sans-serif;letter-spacing:-0.5px;-webkit-text-stroke:0.25px;color:#d4d4d4;white-space:nowrap;position:absolute;left:1652.3px;width:80px;text-align:center;top:396.1px">270ms</div>
<div style="font:14px 'Liberation Sans',sans-serif;letter-spacing:-0.5px;-webkit-text-stroke:0.25px;color:#d4d4d4;white-space:nowrap;position:absolute;right:0px;top:396.1px">300ms</div>
<div style="font:14px 'Liberation Sans',sans-serif;letter-spacing:-0.5px;-webkit-text-stroke:0.25px;color:#00ff00;white-space:nowrap;position:absolute;left:916.5px;width:80px;text-align:center;top:1.1px">V(a)</div></div></div>
<div style="position:absolute;left:2px;top:562px;width:1917px;height:457px;box-sizing:border-box;border:1px solid #000;border-radius:5px 5px 0 0;background:#b9d1ea"></div>
<div style="position:absolute;left:3px;top:563px;width:1915px;height:1px;background:#f4f8fc;border-radius:4px 4px 0 0"></div>
<div style="position:absolute;left:3px;top:564px;width:1915px;height:28px;border-radius:3px 3px 0 0;background:linear-gradient(#a9c1dc 0px,#9db8d5 14px,#aec7e2 24px,#b9d1ea 30px)"></div>
<div style="position:absolute;left:3px;top:1017px;width:1915px;height:1px;background:#30d8f8"></div>
<div style="position:absolute;left:1917px;top:568px;width:1px;height:450px;background:#30d8f8"></div>
<div style="position:absolute;left:32px;top:575px;font:12px 'Liberation Sans',sans-serif;color:#000;white-space:nowrap;letter-spacing:-0.3px">MPP integrator_T_1C</div>
<div style="position:absolute;left:13px;top:572px;width:17px;height:17px"><svg width="17" height="17" viewBox="0 0 17 17">
<path d="M0 8.5H4 M4.5 3V14 M4.5 6 L11 0.5 M4.5 11 L11 16.5" fill="none" stroke="#0000ff" stroke-width="1.3"/>
<rect x="3" y="4" width="3" height="9" fill="#0000ff"/>
<path d="M11 16.5 L7 15.5 L10 12.5Z" fill="#0000ff"/></svg></div>
<div style="position:absolute;left:1808px;top:572px;width:32px;height:18px;box-sizing:border-box;border:1px solid #52647f;border-radius:3px;background:linear-gradient(#c4d6ea 0px,#bed1e7 7px,#9cb6d4 8px,#a5bfdc 13px,#bcd2ea 17px)"></div>
<div style="position:absolute;left:1842px;top:572px;width:32px;height:18px;box-sizing:border-box;border:1px solid #52647f;border-radius:3px;background:linear-gradient(#c4d6ea 0px,#bed1e7 7px,#9cb6d4 8px,#a5bfdc 13px,#bcd2ea 17px)"></div>
<div style="position:absolute;left:1876px;top:572px;width:32px;height:18px;box-sizing:border-box;border:1px solid #501818;border-radius:3px;background:linear-gradient(#eaa898 0px,#e09080 7px,#c4452a 8px,#c8553a 13px,#dc8a76 17px)"></div>
<svg style="position:absolute;left:1808px;top:572px" width="100" height="18" viewBox="0 0 100 18">
<rect x="10.5" y="8.5" width="10" height="4" rx="1.2" fill="#f2f2f2" stroke="#3a3a4c" stroke-width="1"/>
<rect x="44.5" y="3.5" width="10" height="8" rx="1.2" fill="#f2f2f2" stroke="#3a3a4c" stroke-width="1"/>
<rect x="47.5" y="6.5" width="4" height="2" fill="#cfd8e4" stroke="#3a3a4c" stroke-width="1"/>
<path d="M78.5 3.5 L82 3.5 L84 6 L86 3.5 L89.5 3.5 L86 8 L89.5 12.5 L86 12.5 L84 10 L82 12.5 L78.5 12.5 L82 8 Z" fill="#f2f2f2" stroke="#3a3a4c" stroke-width="0.9"/>
</svg>
<div style="position:absolute;left:10px;top:592px;width:1900px;height:419px;background:#ffffff"></div>
<div style="position:absolute;left:10px;top:592px;width:1899px;height:418px;background:#a0a0a0"></div>
<div style="position:absolute;left:11px;top:593px;width:1897px;height:416px;background:#696969"></div>
<div style="position:absolute;left:12px;top:594px;width:1896px;height:415px;overflow:hidden"><div style="position:relative;width:1896px;height:415px;background:#c0c0c0"><svg width="1896" height="415" viewBox="12 594 1896 415" style="position:absolute;left:0;top:0"><polyline points="539.5,720.5 604.5,720.5" fill="none" stroke="#0000ff" stroke-width="1"/>
<polyline points="539.5,720.5 539.5,767.5" fill="none" stroke="#0000ff" stroke-width="1"/>
<polyline points="604.5,720.5 604.5,771.5" fill="none" stroke="#0000ff" stroke-width="1"/>
<polyline points="539.5,749.5 562.5,749.5" fill="none" stroke="#0000ff" stroke-width="1"/>
<polyline points="562.5,749.5 574.0,749.5" fill="none" stroke="#000080" stroke-width="1"/>
<polyline points="578.0,749.5 589.5,749.5" fill="none" stroke="#000080" stroke-width="1"/>
<line x1="573.5" y1="742" x2="573.5" y2="757" stroke="#000080" stroke-width="1.6"/>
<line x1="577.5" y1="742" x2="577.5" y2="757" stroke="#000080" stroke-width="1.6"/>
<polyline points="589.5,749.5 641.5,749.5" fill="none" stroke="#0000ff" stroke-width="1"/>
<circle cx="539.5" cy="781.5" r="14" fill="none" stroke="#000080" stroke-width="1"/>
<path d="M529.5,782.5 C531.5,772.5 537.5,772.5 539.5,781.5 C541.5,790.5 547.5,790.5 549.5,780.5" fill="none" stroke="#000080" stroke-width="1"/>
<path d="M536.5,771.5 H542.5 M539.5,768.5 V774.5 M536.5,792.5 H542.5" fill="none" stroke="#000080" stroke-width="1"/>
<polyline points="539.5,795.5 539.5,821.5 604.5,821.5" fill="none" stroke="#0000ff" stroke-width="1"/>
<polyline points="604.5,771.5 604.5,775.1 611.7,778.7 597.3,785.9 611.7,793.1 597.3,800.3 604.5,803.9 604.5,807.5" fill="none" stroke="#000080" stroke-width="1"/>
<polyline points="604.5,807.5 604.5,836.5" fill="none" stroke="#0000ff" stroke-width="1"/>
<polygon points="596,836.5 613,836.5 604.5,845" fill="none" stroke="#0000ff" stroke-width="1"/>
<rect x="537" y="747" width="5" height="5" fill="#0000ff"/>
<rect x="602" y="747" width="5" height="5" fill="#0000ff"/>
<rect x="602" y="819" width="5" height="5" fill="#0000ff"/>
<polygon points="641.5,727.5 670.5,742.5 641.5,756.5" fill="none" stroke="#000080" stroke-width="1"/>
<polyline points="641.5,734.5 647.0,734.5" fill="none" stroke="#000080" stroke-width="1"/>
<polyline points="641.5,749.5 647.0,749.5" fill="none" stroke="#000080" stroke-width="1"/>
<polyline points="644.5,746.5 644.5,752.0" fill="none" stroke="#000080" stroke-width="1"/>
<polyline points="655.5,735.0 655.5,728.0" fill="none" stroke="#000080" stroke-width="1"/>
<polyline points="655.5,749.5 655.5,759.5" fill="none" stroke="#000080" stroke-width="1"/>
<path d="M658.0,733.5 H662.5 M660.25,731.0 V736.0 M658.0,751.5 H662.5" fill="none" stroke="#000080" stroke-width="1"/>
<path d="M652.3,720.5 L658.5,723.25 L652.3,726.0" fill="none" stroke="#101010" stroke-width="1.5"/>
<path d="M652.3,716.0 H659.0 M655.65,712.7 V719.3" fill="none" stroke="#101010" stroke-width="1.3"/>
<path d="M652.3,761.5 L658.5,764.25 L652.3,767" fill="none" stroke="#101010" stroke-width="1.5"/>
<polyline points="641.5,734.5 633.5,734.5 633.5,698.5 691.5,698.5 691.5,742.5" fill="none" stroke="#0000ff" stroke-width="1"/>
<polyline points="670.5,742.5 757.5,742.5 757.5,770.5 988.5,770.5" fill="none" stroke="#0000ff" stroke-width="1"/>
<rect x="689" y="740" width="5" height="5" fill="#0000ff"/>
<rect x="726" y="740" width="5" height="5" fill="#0000ff"/>
<polyline points="728.5,742.5 728.5,746.1 735.7,749.7 721.3,756.9 735.7,764.1 721.3,771.3 728.5,774.9 728.5,778.5" fill="none" stroke="#000080" stroke-width="1"/>
<polyline points="728.5,778.5 728.5,828.5 771.5,828.5" fill="none" stroke="#0000ff" stroke-width="1"/>
<rect x="726" y="790" width="5" height="5" fill="#0000ff"/>
<polyline points="728.5,792.5 786.5,792.5" fill="none" stroke="#0000ff" stroke-width="1"/>
<polyline points="786.5,792.5 790.1,792.5 793.7,785.3 800.9,799.7 808.1,785.3 815.3,799.7 818.9,792.5 822.5,792.5" fill="none" stroke="#000080" stroke-width="1"/>
<polyline points="822.5,792.5 829.5,792.5 829.5,836.5" fill="none" stroke="#0000ff" stroke-width="1"/>
<polygon points="771.5,821.5 800.5,836.5 771.5,850.5" fill="none" stroke="#000080" stroke-width="1"/>
<polyline points="771.5,828.5 777.0,828.5" fill="none" stroke="#000080" stroke-width="1"/>
<polyline points="771.5,843.5 777.0,843.5" fill="none" stroke="#000080" stroke-width="1"/>
<polyline points="774.5,840.5 774.5,846.0" fill="none" stroke="#000080" stroke-width="1"/>
<polyline points="785.5,829.0 785.5,822.0" fill="none" stroke="#000080" stroke-width="1"/>
<polyline points="785.5,843.5 785.5,853.5" fill="none" stroke="#000080" stroke-width="1"/>
<path d="M788.0,827.5 H792.5 M790.25,825.0 V830.0 M788.0,845.5 H792.5" fill="none" stroke="#000080" stroke-width="1"/>
<path d="M782.3,814.5 L788.5,817.25 L782.3,820.0" fill="none" stroke="#101010" stroke-width="1.5"/>
<path d="M782.3,810.0 H789.0 M785.65,806.7 V813.3" fill="none" stroke="#101010" stroke-width="1.3"/>
<path d="M782.3,855.5 L788.5,858.25 L782.3,861" fill="none" stroke="#101010" stroke-width="1.5"/>
<polyline points="800.5,836.5 989.5,836.5" fill="none" stroke="#0000ff" stroke-width="1"/>
<rect x="827" y="834" width="5" height="5" fill="#0000ff"/>
<polyline points="771.5,843.5 757.5,843.5 757.5,850.5" fill="none" stroke="#0000ff" stroke-width="1"/>
<polygon points="749,850.5 766,850.5 757.5,859" fill="none" stroke="#0000ff" stroke-width="1"/>
<polyline points="953.5,611.5 1040.5,611.5 1040.5,621.5" fill="none" stroke="#0000ff" stroke-width="1"/>
<rect x="987" y="609" width="5" height="5" fill="#0000ff"/>
<polyline points="989.5,611.5 989.5,614.5" fill="none" stroke="#0000ff" stroke-width="1"/>
<circle cx="989.5" cy="628.5" r="14" fill="none" stroke="#000080" stroke-width="1"/>
<path d="M985.0,620.5 H994.0 M989.5,616.0 V625.0 M985.0,638.0 H994.0" fill="none" stroke="#000080" stroke-width="1"/>
<polyline points="989.5,642.5 989.5,654.5" fill="none" stroke="#0000ff" stroke-width="1"/>
<polygon points="981,654.5 998,654.5 989.5,663" fill="none" stroke="#0000ff" stroke-width="1"/>
<circle cx="1050.5" cy="632.5" r="14" fill="none" stroke="#000080" stroke-width="1"/>
<path d="M1036.5,632.5 H1043.5" fill="none" stroke="#000080" stroke-width="1"/><path d="M1041.5,629.5 L1045.5,632.5 L1041.5,635.5 Z" fill="#000080"/>
<path d="M1050.0,640.5 L1063.5,632.5" fill="none" stroke="#000080" stroke-width="1"/>
<circle cx="1049.0" cy="641.5" r="1.6" fill="none" stroke="#000080" stroke-width="1"/>
<polyline points="1040.5,622.5 1040.5,611.5" fill="none" stroke="#000080" stroke-width="1"/>
<polyline points="1062.5,625.5 1062.5,611.5" fill="none" stroke="#000080" stroke-width="1"/>
<path d="M1042.5,613.5 H1047.5 M1045.0,611.0 V616.0" fill="none" stroke="#000080" stroke-width="1"/>
<path d="M1058.5,611.5 V615.5" fill="none" stroke="#000080" stroke-width="1"/>
<polyline points="1062.5,611.5 1076.5,611.5 1076.5,618.5" fill="none" stroke="#0000ff" stroke-width="1"/>
<polygon points="1068,618.5 1085,618.5 1076.5,627" fill="none" stroke="#0000ff" stroke-width="1"/>
<polyline points="1025.5,632.5 1036.5,632.5" fill="none" stroke="#0000ff" stroke-width="1"/>
<polyline points="1025.5,632.5 1025.5,770.5" fill="none" stroke="#0000ff" stroke-width="1"/>
<polyline points="1064.5,632.5 1076.5,632.5 1076.5,836.5" fill="none" stroke="#0000ff" stroke-width="1"/>
<polyline points="924.5,698.5 1040.5,698.5 1040.5,759.5" fill="none" stroke="#0000ff" stroke-width="1"/>
<rect x="980" y="696" width="5" height="5" fill="#0000ff"/>
<polyline points="982.5,698.5 982.5,701.5" fill="none" stroke="#0000ff" stroke-width="1"/>
<circle cx="982.5" cy="715.5" r="14" fill="none" stroke="#000080" stroke-width="1"/>
<path d="M972.5,716.5 C974.5,706.5 980.5,706.5 982.5,715.5 C984.5,724.5 990.5,724.5 992.5,714.5" fill="none" stroke="#000080" stroke-width="1"/>
<path d="M979.5,705.5 H985.5 M982.5,702.5 V708.5 M979.5,726.5 H985.5" fill="none" stroke="#000080" stroke-width="1"/>
<polyline points="982.5,729.5 982.5,741.5" fill="none" stroke="#0000ff" stroke-width="1"/>
<polygon points="974,741.5 991,741.5 982.5,750" fill="none" stroke="#0000ff" stroke-width="1"/>
<polyline points="989.5,770.5 993.1,770.5 996.7,763.3 1003.9,777.7 1011.1,763.3 1018.3,777.7 1021.9,770.5 1025.5,770.5" fill="none" stroke="#000080" stroke-width="1"/>
<rect x="1023" y="768" width="5" height="5" fill="#0000ff"/>
<polyline points="1025.5,770.5 1036.5,770.5" fill="none" stroke="#0000ff" stroke-width="1"/>
<circle cx="1050.5" cy="770.5" r="14" fill="none" stroke="#000080" stroke-width="1"/>
<path d="M1036.5,770.5 H1043.5" fill="none" stroke="#000080" stroke-width="1"/><path d="M1041.5,767.5 L1045.5,770.5 L1041.5,773.5 Z" fill="#000080"/>
<path d="M1050.0,778.5 L1063.5,770.5" fill="none" stroke="#000080" stroke-width="1"/>
<circle cx="1049.0" cy="779.5" r="1.6" fill="none" stroke="#000080" stroke-width="1"/>
<polyline points="1040.5,760.5 1040.5,749.5" fill="none" stroke="#000080" stroke-width="1"/>
<polyline points="1062.5,763.5 1062.5,749.5" fill="none" stroke="#000080" stroke-width="1"/>
<path d="M1042.5,751.5 H1047.5 M1045.0,749.0 V754.0" fill="none" stroke="#000080" stroke-width="1"/>
<path d="M1058.5,749.5 V753.5" fill="none" stroke="#000080" stroke-width="1"/>
<polyline points="1062.5,749.5 1062.5,727.5 1069.5,727.5 1069.5,734.5" fill="none" stroke="#0000ff" stroke-width="1"/>
<polygon points="1061,734.5 1078,734.5 1069.5,743" fill="none" stroke="#0000ff" stroke-width="1"/>
<polyline points="1064.5,770.5 1091.5,770.5" fill="none" stroke="#0000ff" stroke-width="1"/>
<rect x="1074" y="768" width="5" height="5" fill="#0000ff"/>
<rect x="1074" y="703" width="5" height="5" fill="#0000ff"/>
<polyline points="1076.5,705.5 1084.5,705.5" fill="none" stroke="#0000ff" stroke-width="1"/>
<polyline points="1084.5,705.5 1088.1,705.5 1091.7,698.3 1098.9,712.7 1106.1,698.3 1113.3,712.7 1116.9,705.5 1120.5,705.5" fill="none" stroke="#000080" stroke-width="1"/>
<polyline points="1120.5,705.5 1141.5,705.5" fill="none" stroke="#0000ff" stroke-width="1"/>
<rect x="1125" y="703" width="5" height="5" fill="#0000ff"/>
<rect x="1074" y="739" width="5" height="5" fill="#0000ff"/>
<polyline points="1076.5,741.5 1092.5,741.5" fill="none" stroke="#0000ff" stroke-width="1"/>
<polyline points="1092.5,741.5 1104.0,741.5" fill="none" stroke="#000080" stroke-width="1"/>
<polyline points="1108.0,741.5 1119.5,741.5" fill="none" stroke="#000080" stroke-width="1"/>
<line x1="1103.5" y1="734" x2="1103.5" y2="749" stroke="#000080" stroke-width="1.6"/>
<line x1="1107.5" y1="734" x2="1107.5" y2="749" stroke="#000080" stroke-width="1.6"/>
<polyline points="1119.5,741.5 1156.5,741.5" fill="none" stroke="#0000ff" stroke-width="1"/>
<rect x="1125" y="739" width="5" height="5" fill="#0000ff"/>
<polyline points="1127.5,705.5 1127.5,778.5 1120.5,778.5" fill="none" stroke="#0000ff" stroke-width="1"/>
<polygon points="1091.5,763.5 1120.5,778.5 1091.5,792.5" fill="none" stroke="#000080" stroke-width="1"/>
<polyline points="1091.5,770.5 1097.0,770.5" fill="none" stroke="#000080" stroke-width="1"/>
<polyline points="1091.5,785.5 1097.0,785.5" fill="none" stroke="#000080" stroke-width="1"/>
<polyline points="1094.5,782.5 1094.5,788.0" fill="none" stroke="#000080" stroke-width="1"/>
<polyline points="1105.5,771.0 1105.5,764.0" fill="none" stroke="#000080" stroke-width="1"/>
<polyline points="1105.5,785.5 1105.5,795.5" fill="none" stroke="#000080" stroke-width="1"/>
<path d="M1108.0,769.5 H1112.5 M1110.25,767.0 V772.0 M1108.0,787.5 H1112.5" fill="none" stroke="#000080" stroke-width="1"/>
<polyline points="1091.5,785.5 1083.5,785.5 1083.5,815.5" fill="none" stroke="#0000ff" stroke-width="1"/>
<polygon points="1075,815.5 1092,815.5 1083.5,824" fill="none" stroke="#0000ff" stroke-width="1"/>
<rect x="1081" y="805" width="5" height="5" fill="#0000ff"/>
<polyline points="1156.5,741.5 1160.1,741.5 1163.7,734.3 1170.9,748.7 1178.1,734.3 1185.3,748.7 1188.9,741.5 1192.5,741.5" fill="none" stroke="#000080" stroke-width="1"/>
<polyline points="1192.5,741.5 1214.5,741.5" fill="none" stroke="#0000ff" stroke-width="1"/>
<rect x="1197" y="739" width="5" height="5" fill="#0000ff"/>
<polyline points="1214.5,741.5 1218.1,741.5 1221.7,734.3 1228.9,748.7 1236.1,734.3 1243.3,748.7 1246.9,741.5 1250.5,741.5" fill="none" stroke="#000080" stroke-width="1"/>
<polyline points="1250.5,741.5 1272.5,741.5" fill="none" stroke="#0000ff" stroke-width="1"/>
<rect x="1255" y="739" width="5" height="5" fill="#0000ff"/>
<polyline points="1199.5,698.5 1215.5,698.5" fill="none" stroke="#0000ff" stroke-width="1"/>
<polyline points="1215.5,698.5 1227.0,698.5" fill="none" stroke="#000080" stroke-width="1"/>
<polyline points="1231.0,698.5 1242.5,698.5" fill="none" stroke="#000080" stroke-width="1"/>
<line x1="1226.5" y1="691" x2="1226.5" y2="706" stroke="#000080" stroke-width="1.6"/>
<line x1="1230.5" y1="691" x2="1230.5" y2="706" stroke="#000080" stroke-width="1.6"/>
<polyline points="1242.5,698.5 1257.5,698.5" fill="none" stroke="#0000ff" stroke-width="1"/>
<polyline points="1199.5,698.5 1199.5,770.5 1207.5,770.5" fill="none" stroke="#0000ff" stroke-width="1"/>
<polyline points="1257.5,698.5 1257.5,778.5 1236.5,778.5" fill="none" stroke="#0000ff" stroke-width="1"/>
<polygon points="1207.5,763.5 1236.5,778.5 1207.5,792.5" fill="none" stroke="#000080" stroke-width="1"/>
<polyline points="1207.5,770.5 1213.0,770.5" fill="none" stroke="#000080" stroke-width="1"/>
<polyline points="1207.5,785.5 1213.0,785.5" fill="none" stroke="#000080" stroke-width="1"/>
<polyline points="1210.5,782.5 1210.5,788.0" fill="none" stroke="#000080" stroke-width="1"/>
<polyline points="1221.5,771.0 1221.5,764.0" fill="none" stroke="#000080" stroke-width="1"/>
<polyline points="1221.5,785.5 1221.5,795.5" fill="none" stroke="#000080" stroke-width="1"/>
<path d="M1224.0,769.5 H1228.5 M1226.25,767.0 V772.0 M1224.0,787.5 H1228.5" fill="none" stroke="#000080" stroke-width="1"/>
<polyline points="1207.5,785.5 1199.5,785.5 1199.5,799.5" fill="none" stroke="#0000ff" stroke-width="1"/>
<polygon points="1191,799.5 1208,799.5 1199.5,808" fill="none" stroke="#0000ff" stroke-width="1"/>
<polyline points="1105.5,763.5 1330.5,763.5 1330.5,772.5" fill="none" stroke="#0000ff" stroke-width="1"/>
<rect x="1219" y="761" width="5" height="5" fill="#0000ff"/>
<path d="M1315,772.5 H1346 M1315,783.5 H1346" fill="none" stroke="#000080" stroke-width="1"/>
<rect x="1322.5" y="776.5" width="15" height="3" fill="none" stroke="#000080" stroke-width="1"/>
<rect x="1322.5" y="787.5" width="15" height="3" fill="none" stroke="#000080" stroke-width="1"/>
<path d="M1322,767.5 H1327 M1324.5,765 V770" fill="none" stroke="#000080" stroke-width="1"/>
<polyline points="1330.5,790.5 1330.5,823.5" fill="none" stroke="#0000ff" stroke-width="1"/>
<rect x="1328" y="805" width="5" height="5" fill="#0000ff"/>
<polyline points="1330.5,807.5 1301.5,807.5 1301.5,829.5" fill="none" stroke="#0000ff" stroke-width="1"/>
<polygon points="1293,829.5 1310,829.5 1301.5,838" fill="none" stroke="#0000ff" stroke-width="1"/>
<path d="M1315,823.5 H1346 M1315,834.5 H1346" fill="none" stroke="#000080" stroke-width="1"/>
<rect x="1322.5" y="827.5" width="15" height="3" fill="none" stroke="#000080" stroke-width="1"/>
<rect x="1322.5" y="838.5" width="15" height="3" fill="none" stroke="#000080" stroke-width="1"/>
<path d="M1322,818.5 H1327 M1324.5,816 V821" fill="none" stroke="#000080" stroke-width="1"/>
<polyline points="1330.5,841.5 1330.5,850.5 1105.5,850.5 1105.5,792.5" fill="none" stroke="#0000ff" stroke-width="1"/>
<polyline points="1221.5,792.5 1221.5,850.5" fill="none" stroke="#0000ff" stroke-width="1"/>
<rect x="1219" y="848" width="5" height="5" fill="#0000ff"/>
<polyline points="934.5,807.5 1040.5,807.5 1040.5,825.5" fill="none" stroke="#0000ff" stroke-width="1"/>
<rect x="965" y="805" width="5" height="5" fill="#0000ff"/>
<polyline points="967.5,807.5 967.5,868.5" fill="none" stroke="#0000ff" stroke-width="1"/>
<circle cx="967.5" cy="882.5" r="14" fill="none" stroke="#000080" stroke-width="1"/>
<path d="M957.5,883.5 C959.5,873.5 965.5,873.5 967.5,882.5 C969.5,891.5 975.5,891.5 977.5,881.5" fill="none" stroke="#000080" stroke-width="1"/>
<path d="M964.5,872.5 H970.5 M967.5,869.5 V875.5 M964.5,893.5 H970.5" fill="none" stroke="#000080" stroke-width="1"/>
<polyline points="967.5,896.5 967.5,908.5" fill="none" stroke="#0000ff" stroke-width="1"/>
<polygon points="959,908.5 976,908.5 967.5,917" fill="none" stroke="#0000ff" stroke-width="1"/>
<polyline points="989.5,836.5 993.1,836.5 996.7,829.3 1003.9,843.7 1011.1,829.3 1018.3,843.7 1021.9,836.5 1025.5,836.5" fill="none" stroke="#000080" stroke-width="1"/>
<rect x="1023" y="834" width="5" height="5" fill="#0000ff"/>
<polyline points="1025.5,836.5 1036.5,836.5" fill="none" stroke="#0000ff" stroke-width="1"/>
<circle cx="1050.5" cy="836.5" r="14" fill="none" stroke="#000080" stroke-width="1"/>
<path d="M1036.5,836.5 H1043.5" fill="none" stroke="#000080" stroke-width="1"/><path d="M1041.5,833.5 L1045.5,836.5 L1041.5,839.5 Z" fill="#000080"/>
<path d="M1050.0,844.5 L1063.5,836.5" fill="none" stroke="#000080" stroke-width="1"/>
<circle cx="1049.0" cy="845.5" r="1.6" fill="none" stroke="#000080" stroke-width="1"/>
<polyline points="1040.5,826.5 1040.5,815.5" fill="none" stroke="#000080" stroke-width="1"/>
<polyline points="1062.5,829.5 1062.5,815.5" fill="none" stroke="#000080" stroke-width="1"/>
<path d="M1042.5,817.5 H1047.5 M1045.0,815.0 V820.0" fill="none" stroke="#000080" stroke-width="1"/>
<path d="M1058.5,815.5 V819.5" fill="none" stroke="#000080" stroke-width="1"/>
<polyline points="1062.5,829.5 1062.5,807.5 1083.5,807.5" fill="none" stroke="#0000ff" stroke-width="1"/>
<polyline points="1064.5,836.5 1098.5,836.5 1098.5,952.5 1064.5,952.5" fill="none" stroke="#0000ff" stroke-width="1"/>
<rect x="1074" y="834" width="5" height="5" fill="#0000ff"/>
<polyline points="1025.5,836.5 1025.5,952.5 1036.5,952.5" fill="none" stroke="#0000ff" stroke-width="1"/>
<polyline points="960.5,930.5 1040.5,930.5 1040.5,941.5" fill="none" stroke="#0000ff" stroke-width="1"/>
<rect x="994" y="928" width="5" height="5" fill="#0000ff"/>
<polyline points="996.5,930.5 996.5,941.5" fill="none" stroke="#0000ff" stroke-width="1"/>
<circle cx="996.5" cy="955.5" r="14" fill="none" stroke="#000080" stroke-width="1"/>
<path d="M992.0,947.5 H1001.0 M996.5,943.0 V952.0 M992.0,965.0 H1001.0" fill="none" stroke="#000080" stroke-width="1"/>
<polyline points="996.5,969.5 996.5,981.5" fill="none" stroke="#0000ff" stroke-width="1"/>
<polygon points="988,981.5 1005,981.5 996.5,990" fill="none" stroke="#0000ff" stroke-width="1"/>
<circle cx="1050.5" cy="952.5" r="14" fill="none" stroke="#000080" stroke-width="1"/>
<path d="M1036.5,952.5 H1043.5" fill="none" stroke="#000080" stroke-width="1"/><path d="M1041.5,949.5 L1045.5,952.5 L1041.5,955.5 Z" fill="#000080"/>
<path d="M1050.0,960.5 L1063.5,952.5" fill="none" stroke="#000080" stroke-width="1"/>
<circle cx="1049.0" cy="961.5" r="1.6" fill="none" stroke="#000080" stroke-width="1"/>
<polyline points="1040.5,942.5 1040.5,931.5" fill="none" stroke="#000080" stroke-width="1"/>
<polyline points="1062.5,945.5 1062.5,931.5" fill="none" stroke="#000080" stroke-width="1"/>
<path d="M1042.5,933.5 H1047.5 M1045.0,931.0 V936.0" fill="none" stroke="#000080" stroke-width="1"/>
<path d="M1058.5,931.5 V935.5" fill="none" stroke="#000080" stroke-width="1"/>
<polyline points="1062.5,930.5 1076.5,930.5 1076.5,937.5" fill="none" stroke="#0000ff" stroke-width="1"/>
<polygon points="1068,937.5 1085,937.5 1076.5,946" fill="none" stroke="#0000ff" stroke-width="1"/></svg><div style="position:absolute;left:538.0px;top:164.69px;font:bold 10px 'Liberation Sans',sans-serif;letter-spacing:0.000px;color:#000;white-space:nowrap;transform:scaleX(1.104);transform-origin:0 0">V3</div>
<div style="position:absolute;left:556.0px;top:164.69px;font:bold 10px 'Liberation Sans',sans-serif;letter-spacing:0.000px;color:#000;white-space:nowrap;transform:scaleX(1.054);transform-origin:0 0">1n</div>
<div style="position:absolute;left:556.0px;top:136.69px;font:bold 10px 'Liberation Sans',sans-serif;letter-spacing:0.000px;color:#000;white-space:nowrap;transform:scaleX(1.017);transform-origin:0 0">C3</div>
<div style="position:absolute;left:601.0px;top:182.69px;font:bold 10px 'Liberation Sans',sans-serif;letter-spacing:0.000px;color:#000;white-space:nowrap;transform:scaleX(0.986);transform-origin:0 0">R7</div>
<div style="position:absolute;left:601.0px;top:199.69px;font:bold 10px 'Liberation Sans',sans-serif;letter-spacing:0.656px;color:#000;white-space:nowrap;transform:scaleX(1.120);transform-origin:0 0">16k</div>
<div style="position:absolute;left:650.0px;top:128.69px;font:bold 10px 'Liberation Sans',sans-serif;letter-spacing:0.000px;color:#000;white-space:nowrap;transform:scaleX(0.993);transform-origin:0 0">U3</div>
<div style="position:absolute;left:650.0px;top:157.69px;font:bold 10px 'Liberation Sans',sans-serif;letter-spacing:0.035px;color:#000;white-space:nowrap;transform:scaleX(1.120);transform-origin:0 0">LTC6244HV</div>
<div style="position:absolute;left:725.0px;top:153.69px;font:bold 10px 'Liberation Sans',sans-serif;letter-spacing:0.000px;color:#000;white-space:nowrap;transform:scaleX(1.095);transform-origin:0 0">R8</div>
<div style="position:absolute;left:725.0px;top:170.69px;font:bold 10px 'Liberation Sans',sans-serif;letter-spacing:0.806px;color:#000;white-space:nowrap;transform:scaleX(1.120);transform-origin:0 0">10k</div>
<div style="position:absolute;left:785.0px;top:180.69px;font:bold 10px 'Liberation Sans',sans-serif;letter-spacing:0.000px;color:#000;white-space:nowrap;transform:scaleX(1.064);transform-origin:0 0">R9</div>
<div style="position:absolute;left:781.0px;top:206.69px;font:bold 10px 'Liberation Sans',sans-serif;letter-spacing:0.806px;color:#000;white-space:nowrap;transform:scaleX(1.120);transform-origin:0 0">10k</div>
<div style="position:absolute;left:781.0px;top:222.69px;font:bold 10px 'Liberation Sans',sans-serif;letter-spacing:0.000px;color:#000;white-space:nowrap;transform:scaleX(0.978);transform-origin:0 0">U4</div>
<div style="position:absolute;left:781.0px;top:251.69px;font:bold 10px 'Liberation Sans',sans-serif;letter-spacing:0.035px;color:#000;white-space:nowrap;transform:scaleX(1.120);transform-origin:0 0">LTC6244HV</div>
<div style="position:absolute;left:494.0px;top:61.69px;font:bold 10px 'Liberation Sans',sans-serif;letter-spacing:0.005px;color:#000;white-space:nowrap;transform:scaleX(1.120);transform-origin:0 0">PULSE(0 -1 9u 1n 1n 400u 1m 1k)</div>
<div style="position:absolute;left:527.0px;top:287.69px;font:bold 10px 'Liberation Sans',sans-serif;letter-spacing:-0.000px;color:#000;white-space:nowrap;transform:scaleX(1.072);transform-origin:0 0">.step param R list 1meg 1000meg</div>
<div style="position:absolute;left:766.0px;top:28.69px;font:bold 10px 'Liberation Sans',sans-serif;letter-spacing:0.011px;color:#000;white-space:nowrap;transform:scaleX(1.120);transform-origin:0 0">PULSE(0 0 500u 1n 1n 10u 1m 1k)</div>
<div style="position:absolute;left:748.0px;top:43.69px;font:bold 10px 'Liberation Sans',sans-serif;letter-spacing:0.000px;color:#0000ff;white-space:nowrap;transform:scaleX(1.081);transform-origin:0 0">switch on_Von=1V,&nbsp; switch off_Von=0V</div>
<div style="position:absolute;left:836.0px;top:99.69px;font:bold 10px 'Liberation Sans',sans-serif;letter-spacing:0.000px;color:#000;white-space:nowrap;transform:scaleX(1.015);transform-origin:0 0">ground_sample</div>
<div style="position:absolute;left:765.0px;top:117.69px;font:bold 10px 'Liberation Sans',sans-serif;letter-spacing:0.000px;color:#000;white-space:nowrap;transform:scaleX(1.115);transform-origin:0 0">PULSE(0 0 22u 1n 1n 65u 1m 1k)</div>
<div style="position:absolute;left:847.0px;top:207.69px;font:bold 10px 'Liberation Sans',sans-serif;letter-spacing:0.000px;color:#000;white-space:nowrap;transform:scaleX(1.054);transform-origin:0 0">target_sample</div>
<div style="position:absolute;left:751.0px;top:283.69px;font:bold 10px 'Liberation Sans',sans-serif;letter-spacing:0.016px;color:#000;white-space:nowrap;transform:scaleX(1.120);transform-origin:0 0">PULSE(0 1 10u 1n 1n 10u 1m 1k)</div>
<div style="position:absolute;left:901.0px;top:331.69px;font:bold 10px 'Liberation Sans',sans-serif;letter-spacing:0.000px;color:#000;white-space:nowrap;transform:scaleX(0.985);transform-origin:0 0">groundEF</div>
<div style="position:absolute;left:761.0px;top:354.69px;font:bold 10px 'Liberation Sans',sans-serif;letter-spacing:0.008px;color:#000;white-space:nowrap;transform:scaleX(1.120);transform-origin:0 0">PULSE(0 0 515u 1n 1n 65u 1m 1k)</div>
<div style="position:absolute;left:898.0px;top:12.69px;font:bold 10px 'Liberation Sans',sans-serif;letter-spacing:0.000px;color:#000;white-space:nowrap;transform:scaleX(1.030);transform-origin:0 0">targetEF</div>
<div style="position:absolute;left:988.0px;top:12.69px;font:bold 10px 'Liberation Sans',sans-serif;letter-spacing:0.000px;color:#000;white-space:nowrap;transform:scaleX(1.022);transform-origin:0 0">V7</div>
<div style="position:absolute;left:1019.5px;top:87.0px;width:0;height:0"><div style="position:absolute;left:0;top:0;transform:rotate(-90deg);transform-origin:0 0"><div style="position:absolute;left:0;top:-5.50px;line-height:10px;font:bold 10px 'Liberation Sans',sans-serif;letter-spacing:0.000px;color:#000;white-space:nowrap;transform:scaleX(1.009);transform-origin:0 0">MYSW3</div></div></div>
<div style="position:absolute;left:1056.5px;top:61.0px;width:0;height:0"><div style="position:absolute;left:0;top:0;transform:rotate(-90deg);transform-origin:0 0"><div style="position:absolute;left:0;top:-5.50px;line-height:10px;font:bold 10px 'Liberation Sans',sans-serif;letter-spacing:-0.300px;color:#000;white-space:nowrap;transform:scaleX(0.950);transform-origin:0 0">S3</div></div></div>
<div style="position:absolute;left:981.0px;top:99.69px;font:bold 10px 'Liberation Sans',sans-serif;letter-spacing:0.000px;color:#000;white-space:nowrap;transform:scaleX(1.006);transform-origin:0 0">V4</div>
<div style="position:absolute;left:988.0px;top:159.69px;font:bold 10px 'Liberation Sans',sans-serif;letter-spacing:0.000px;color:#000;white-space:nowrap;transform:scaleX(1.017);transform-origin:0 0">R1</div>
<div style="position:absolute;left:984.0px;top:186.69px;font:bold 10px 'Liberation Sans',sans-serif;letter-spacing:0.806px;color:#000;white-space:nowrap;transform:scaleX(1.120);transform-origin:0 0">10k</div>
<div style="position:absolute;left:1020.5px;top:224.0px;width:0;height:0"><div style="position:absolute;left:0;top:0;transform:rotate(-90deg);transform-origin:0 0"><div style="position:absolute;left:0;top:-5.50px;line-height:10px;font:bold 10px 'Liberation Sans',sans-serif;letter-spacing:0.000px;color:#000;white-space:nowrap;transform:scaleX(0.990);transform-origin:0 0">MYSW1</div></div></div>
<div style="position:absolute;left:1056.5px;top:199.0px;width:0;height:0"><div style="position:absolute;left:0;top:0;transform:rotate(-90deg);transform-origin:0 0"><div style="position:absolute;left:0;top:-5.50px;line-height:10px;font:bold 10px 'Liberation Sans',sans-serif;letter-spacing:-0.300px;color:#000;white-space:nowrap;transform:scaleX(0.950);transform-origin:0 0">S1</div></div></div>
<div style="position:absolute;left:1082.0px;top:94.69px;font:bold 10px 'Liberation Sans',sans-serif;letter-spacing:0.000px;color:#000;white-space:nowrap;transform:scaleX(1.017);transform-origin:0 0">R3</div>
<div style="position:absolute;left:1078.0px;top:119.69px;font:bold 10px 'Liberation Sans',sans-serif;letter-spacing:0.847px;color:#000;white-space:nowrap;transform:scaleX(1.120);transform-origin:0 0">{R}</div>
<div style="position:absolute;left:1086.0px;top:130.69px;font:bold 10px 'Liberation Sans',sans-serif;letter-spacing:0.000px;color:#000;white-space:nowrap;transform:scaleX(1.033);transform-origin:0 0">C2</div>
<div style="position:absolute;left:1083.0px;top:157.69px;font:bold 10px 'Liberation Sans',sans-serif;letter-spacing:0.000px;color:#000;white-space:nowrap;transform:scaleX(1.085);transform-origin:0 0">30n</div>
<div style="position:absolute;left:1100.0px;top:164.69px;font:bold 10px 'Liberation Sans',sans-serif;letter-spacing:-0.044px;color:#000;white-space:nowrap;transform:scaleX(0.950);transform-origin:0 0">U1</div>
<div style="position:absolute;left:1100.0px;top:193.69px;font:bold 10px 'Liberation Sans',sans-serif;letter-spacing:0.035px;color:#000;white-space:nowrap;transform:scaleX(1.120);transform-origin:0 0">LTC6244HV</div>
<div style="position:absolute;left:1129.0px;top:106.19px;font:bold 10px 'Liberation Sans',sans-serif;letter-spacing:0.000px;color:#000;white-space:nowrap;transform:scaleX(0.989);transform-origin:0 0">a</div>
<div style="position:absolute;left:1155.0px;top:130.69px;font:bold 10px 'Liberation Sans',sans-serif;letter-spacing:0.000px;color:#000;white-space:nowrap;transform:scaleX(1.056);transform-origin:0 0">R4</div>
<div style="position:absolute;left:1151.0px;top:156.69px;font:bold 10px 'Liberation Sans',sans-serif;letter-spacing:0.806px;color:#000;white-space:nowrap;transform:scaleX(1.120);transform-origin:0 0">10k</div>
<div style="position:absolute;left:1213.0px;top:130.69px;font:bold 10px 'Liberation Sans',sans-serif;letter-spacing:0.000px;color:#000;white-space:nowrap;transform:scaleX(1.056);transform-origin:0 0">R5</div>
<div style="position:absolute;left:1209.0px;top:156.69px;font:bold 10px 'Liberation Sans',sans-serif;letter-spacing:0.906px;color:#000;white-space:nowrap;transform:scaleX(1.120);transform-origin:0 0">56k</div>
<div style="position:absolute;left:1209.0px;top:86.69px;font:bold 10px 'Liberation Sans',sans-serif;letter-spacing:0.000px;color:#000;white-space:nowrap;transform:scaleX(1.001);transform-origin:0 0">C1</div>
<div style="position:absolute;left:1202.0px;top:112.69px;font:bold 10px 'Liberation Sans',sans-serif;letter-spacing:0.124px;color:#000;white-space:nowrap;transform:scaleX(1.120);transform-origin:0 0">150n</div>
<div style="position:absolute;left:1260.0px;top:141.69px;font:bold 10px 'Liberation Sans',sans-serif;letter-spacing:0.000px;color:#000;white-space:nowrap;transform:scaleX(1.093);transform-origin:0 0">out</div>
<div style="position:absolute;left:1216.0px;top:164.69px;font:bold 10px 'Liberation Sans',sans-serif;letter-spacing:0.000px;color:#000;white-space:nowrap;transform:scaleX(1.001);transform-origin:0 0">U2</div>
<div style="position:absolute;left:1216.0px;top:193.69px;font:bold 10px 'Liberation Sans',sans-serif;letter-spacing:0.035px;color:#000;white-space:nowrap;transform:scaleX(1.120);transform-origin:0 0">LTC6244HV</div>
<div style="position:absolute;left:1281.0px;top:158.69px;font:bold 10px 'Liberation Sans',sans-serif;letter-spacing:0.000px;color:#000;white-space:nowrap;transform:scaleX(1.079);transform-origin:0 0">V+</div>
<div style="position:absolute;left:1329.0px;top:164.69px;font:bold 10px 'Liberation Sans',sans-serif;letter-spacing:-0.000px;color:#000;white-space:nowrap;transform:scaleX(1.046);transform-origin:0 0">V1</div>
<div style="position:absolute;left:1329.0px;top:204.69px;font:bold 10px 'Liberation Sans',sans-serif;letter-spacing:0.000px;color:#000;white-space:nowrap;transform:scaleX(1.120);transform-origin:0 0">5</div>
<div style="position:absolute;left:1329.0px;top:215.69px;font:bold 10px 'Liberation Sans',sans-serif;letter-spacing:0.000px;color:#000;white-space:nowrap;transform:scaleX(1.071);transform-origin:0 0">V2</div>
<div style="position:absolute;left:1329.0px;top:255.69px;font:bold 10px 'Liberation Sans',sans-serif;letter-spacing:0.000px;color:#000;white-space:nowrap;transform:scaleX(1.120);transform-origin:0 0">5</div>
<div style="position:absolute;left:1289.0px;top:245.69px;font:bold 10px 'Liberation Sans',sans-serif;letter-spacing:0.917px;color:#000;white-space:nowrap;transform:scaleX(1.120);transform-origin:0 0">V-</div>
<div style="position:absolute;left:966.0px;top:266.69px;font:bold 10px 'Liberation Sans',sans-serif;letter-spacing:0.000px;color:#000;white-space:nowrap;transform:scaleX(0.981);transform-origin:0 0">V5</div>
<div style="position:absolute;left:988.0px;top:223.69px;font:bold 10px 'Liberation Sans',sans-serif;letter-spacing:0.000px;color:#000;white-space:nowrap;transform:scaleX(1.025);transform-origin:0 0">R2</div>
<div style="position:absolute;left:984.0px;top:251.69px;font:bold 10px 'Liberation Sans',sans-serif;letter-spacing:0.806px;color:#000;white-space:nowrap;transform:scaleX(1.120);transform-origin:0 0">10k</div>
<div style="position:absolute;left:1020.5px;top:291.0px;width:0;height:0"><div style="position:absolute;left:0;top:0;transform:rotate(-90deg);transform-origin:0 0"><div style="position:absolute;left:0;top:-5.50px;line-height:10px;font:bold 10px 'Liberation Sans',sans-serif;letter-spacing:0.000px;color:#000;white-space:nowrap;transform:scaleX(1.020);transform-origin:0 0">MYSW2</div></div></div>
<div style="position:absolute;left:1056.5px;top:265.0px;width:0;height:0"><div style="position:absolute;left:0;top:0;transform:rotate(-90deg);transform-origin:0 0"><div style="position:absolute;left:0;top:-5.50px;line-height:10px;font:bold 10px 'Liberation Sans',sans-serif;letter-spacing:-0.300px;color:#000;white-space:nowrap;transform:scaleX(0.950);transform-origin:0 0">S2</div></div></div>
<div style="position:absolute;left:995.0px;top:338.69px;font:bold 10px 'Liberation Sans',sans-serif;letter-spacing:0.000px;color:#000;white-space:nowrap;transform:scaleX(1.071);transform-origin:0 0">V8</div>
<div style="position:absolute;left:1020.5px;top:407.0px;width:0;height:0"><div style="position:absolute;left:0;top:0;transform:rotate(-90deg);transform-origin:0 0"><div style="position:absolute;left:0;top:-5.50px;line-height:10px;font:bold 10px 'Liberation Sans',sans-serif;letter-spacing:0.000px;color:#000;white-space:nowrap;transform:scaleX(0.984);transform-origin:0 0">MYSW4</div></div></div>
<div style="position:absolute;left:1056.5px;top:381.0px;width:0;height:0"><div style="position:absolute;left:0;top:0;transform:rotate(-90deg);transform-origin:0 0"><div style="position:absolute;left:0;top:-5.50px;line-height:10px;font:bold 10px 'Liberation Sans',sans-serif;letter-spacing:-0.300px;color:#000;white-space:nowrap;transform:scaleX(0.950);transform-origin:0 0">S4</div></div></div>
<div style="position:absolute;left:1097.0px;top:37.69px;font:bold 10px 'Liberation Sans',sans-serif;letter-spacing:0.000px;color:#000;white-space:nowrap;transform:scaleX(1.111);transform-origin:0 0">.model MYSW3 SW(Ron=1 Roff=100Meg Vt=.5 Vh=-.1)</div>
<div style="position:absolute;left:1097.0px;top:70.69px;font:bold 10px 'Liberation Sans',sans-serif;letter-spacing:0.000px;color:#000;white-space:nowrap;transform:scaleX(1.111);transform-origin:0 0">.model MYSW1 SW(Ron=1 Roff=100Meg Vt=.5 Vh=-.1)</div>
<div style="position:absolute;left:1271.0px;top:295.69px;font:bold 10px 'Liberation Sans',sans-serif;letter-spacing:0.000px;color:#000;white-space:nowrap;transform:scaleX(1.107);transform-origin:0 0">.tran .3</div>
<div style="position:absolute;left:1097.0px;top:319.69px;font:bold 10px 'Liberation Sans',sans-serif;letter-spacing:0.000px;color:#000;white-space:nowrap;transform:scaleX(1.111);transform-origin:0 0">.model MYSW2 SW(Ron=1 Roff=100Meg Vt=.5 Vh=-.1)</div>
<div style="position:absolute;left:1104.0px;top:341.69px;font:bold 10px 'Liberation Sans',sans-serif;letter-spacing:0.000px;color:#000;white-space:nowrap;transform:scaleX(1.109);transform-origin:0 0">.model MYSW4 SW(Ron=1 Roff=100Meg Vt=.5 Vh=-.1)</div></div></div>
</body></html>
